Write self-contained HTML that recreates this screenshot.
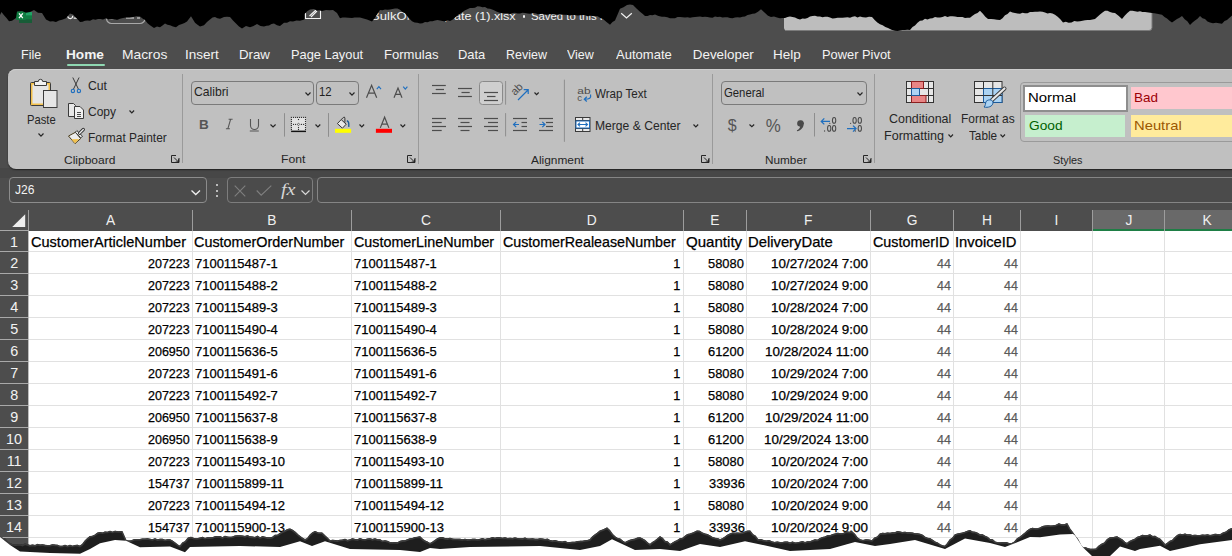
<!DOCTYPE html><html><head><meta charset="utf-8"><style>
html,body{margin:0;padding:0;}
body{width:1232px;height:556px;overflow:hidden;position:relative;background:#4d4d4d;font-family:"Liberation Sans",sans-serif;}
.t{position:absolute;white-space:pre;transform-origin:0 0;}
.c{-webkit-text-stroke:0.25px currentColor;}
.r{position:absolute;}
svg{position:absolute;overflow:visible;}
</style></head><body>
<div class="t " style="left:20.67px;top:47.75px;font-size:13.40px;line-height:13.40px;color:#f3f3f3;font-weight:normal;font-style:normal;transform:scaleX(0.9348);">File</div>
<div class="t " style="left:66.29px;top:47.75px;font-size:13.40px;line-height:13.40px;color:#f3f3f3;font-weight:bold;font-style:normal;transform:scaleX(1.0202);">Home</div>
<div class="t " style="left:122.07px;top:47.75px;font-size:13.40px;line-height:13.40px;color:#f3f3f3;font-weight:normal;font-style:normal;transform:scaleX(1.0320);">Macros</div>
<div class="t " style="left:185.45px;top:47.75px;font-size:13.40px;line-height:13.40px;color:#f3f3f3;font-weight:normal;font-style:normal;transform:scaleX(1.0100);">Insert</div>
<div class="t " style="left:239.01px;top:47.75px;font-size:13.40px;line-height:13.40px;color:#f3f3f3;font-weight:normal;font-style:normal;transform:scaleX(0.9900);">Draw</div>
<div class="t " style="left:290.95px;top:47.75px;font-size:13.40px;line-height:13.40px;color:#f3f3f3;font-weight:normal;font-style:normal;transform:scaleX(0.9588);">Page Layout</div>
<div class="t " style="left:383.53px;top:47.75px;font-size:13.40px;line-height:13.40px;color:#f3f3f3;font-weight:normal;font-style:normal;transform:scaleX(0.9768);">Formulas</div>
<div class="t " style="left:458.34px;top:47.75px;font-size:13.40px;line-height:13.40px;color:#f3f3f3;font-weight:normal;font-style:normal;transform:scaleX(0.9630);">Data</div>
<div class="t " style="left:506.17px;top:47.75px;font-size:13.40px;line-height:13.40px;color:#f3f3f3;font-weight:normal;font-style:normal;transform:scaleX(0.9331);">Review</div>
<div class="t " style="left:566.95px;top:47.75px;font-size:13.40px;line-height:13.40px;color:#f3f3f3;font-weight:normal;font-style:normal;transform:scaleX(0.9313);">View</div>
<div class="t " style="left:616.17px;top:47.75px;font-size:13.40px;line-height:13.40px;color:#f3f3f3;font-weight:normal;font-style:normal;transform:scaleX(0.9747);">Automate</div>
<div class="t " style="left:692.80px;top:47.75px;font-size:13.40px;line-height:13.40px;color:#f3f3f3;font-weight:normal;font-style:normal;">Developer</div>
<div class="t " style="left:773.09px;top:47.75px;font-size:13.40px;line-height:13.40px;color:#f3f3f3;font-weight:normal;font-style:normal;transform:scaleX(1.0078);">Help</div>
<div class="t " style="left:822.44px;top:47.75px;font-size:13.40px;line-height:13.40px;color:#f3f3f3;font-weight:normal;font-style:normal;transform:scaleX(0.9602);">Power Pivot</div>
<div class="r" style="left:67px;top:64px;width:38px;height:2px;background:#8fd8b2;border-radius:1px;"></div>
<div class="r" style="left:0px;top:168px;width:1232px;height:9.5px;background:#474747;"></div>
<div class="r" style="left:8px;top:68.5px;width:1240px;height:100px;background:#c0c0c0;border-radius:8px;box-shadow:0 1px 1.5px rgba(0,0,0,0.55), inset 0 1px 0 #cdcdcd;"></div>
<div class="r" style="left:182px;top:74px;width:1px;height:88.5px;background:#9a9a9a;"></div>
<div class="r" style="left:418px;top:74px;width:1px;height:89.5px;background:#9a9a9a;"></div>
<div class="r" style="left:712px;top:74px;width:1px;height:89.5px;background:#9a9a9a;"></div>
<div class="r" style="left:874px;top:74px;width:1px;height:88.5px;background:#9a9a9a;"></div>
<div class="t " style="left:63.69px;top:153.68px;font-size:11.60px;line-height:11.60px;color:#262626;font-weight:normal;font-style:normal;transform:scaleX(1.0349);">Clipboard</div>
<div class="t " style="left:280.50px;top:153.48px;font-size:11.60px;line-height:11.60px;color:#262626;font-weight:normal;font-style:normal;transform:scaleX(1.0507);">Font</div>
<div class="t " style="left:530.78px;top:153.58px;font-size:11.60px;line-height:11.60px;color:#262626;font-weight:normal;font-style:normal;transform:scaleX(1.0257);">Alignment</div>
<div class="t " style="left:764.53px;top:153.58px;font-size:11.60px;line-height:11.60px;color:#262626;font-weight:normal;font-style:normal;transform:scaleX(1.0146);">Number</div>
<div class="t " style="left:1052.51px;top:153.58px;font-size:11.60px;line-height:11.60px;color:#262626;font-weight:normal;font-style:normal;transform:scaleX(0.9333);">Styles</div>
<svg style="left:170.9px;top:155.3px" width="9" height="8" viewBox="0 0 9 8"><path d="M0.5 0.5H5M0.5 0.5V7.5H8V3" stroke="#262626" stroke-width="1" fill="none"/><path d="M3 2.5L7.5 7M7.5 4.2V7H4.7" stroke="#262626" stroke-width="1" fill="none"/></svg>
<svg style="left:407.3px;top:155.3px" width="9" height="8" viewBox="0 0 9 8"><path d="M0.5 0.5H5M0.5 0.5V7.5H8V3" stroke="#262626" stroke-width="1" fill="none"/><path d="M3 2.5L7.5 7M7.5 4.2V7H4.7" stroke="#262626" stroke-width="1" fill="none"/></svg>
<svg style="left:700.5px;top:155.3px" width="9" height="8" viewBox="0 0 9 8"><path d="M0.5 0.5H5M0.5 0.5V7.5H8V3" stroke="#262626" stroke-width="1" fill="none"/><path d="M3 2.5L7.5 7M7.5 4.2V7H4.7" stroke="#262626" stroke-width="1" fill="none"/></svg>
<svg style="left:862.9px;top:155.3px" width="9" height="8" viewBox="0 0 9 8"><path d="M0.5 0.5H5M0.5 0.5V7.5H8V3" stroke="#262626" stroke-width="1" fill="none"/><path d="M3 2.5L7.5 7M7.5 4.2V7H4.7" stroke="#262626" stroke-width="1" fill="none"/></svg>
<div class="t " style="left:26.58px;top:113.70px;font-size:12.40px;line-height:12.40px;color:#262626;font-weight:normal;font-style:normal;transform:scaleX(0.9058);">Paste</div>
<div class="t " style="left:87.88px;top:79.70px;font-size:12.40px;line-height:12.40px;color:#262626;font-weight:normal;font-style:normal;transform:scaleX(0.9852);">Cut</div>
<div class="t " style="left:87.89px;top:106.00px;font-size:12.40px;line-height:12.40px;color:#262626;font-weight:normal;font-style:normal;transform:scaleX(0.9684);">Copy</div>
<div class="t " style="left:87.52px;top:131.50px;font-size:12.40px;line-height:12.40px;color:#262626;font-weight:normal;font-style:normal;transform:scaleX(0.9606);">Format Painter</div>
<svg style="left:37.5px;top:133px" width="6" height="3.6" viewBox="0 0 6 3.6"><path d="M0.5 0.5L3.0 3.1L5.5 0.5" stroke="#262626" stroke-width="1.2" fill="none"/></svg>
<svg style="left:128.8px;top:110px" width="5.6" height="3.4" viewBox="0 0 5.6 3.4"><path d="M0.5 0.5L2.8 2.9L5.1 0.5" stroke="#262626" stroke-width="1.2" fill="none"/></svg>
<div class="r" style="left:191px;top:81px;width:121px;height:22px;border:1px solid #7a7a7a;border-radius:4px;"></div>
<div class="r" style="left:316px;top:81px;width:41px;height:22px;border:1px solid #7a7a7a;border-radius:4px;"></div>
<div class="t " style="left:193.98px;top:86.33px;font-size:12.60px;line-height:12.60px;color:#1f1f1f;font-weight:normal;font-style:normal;transform:scaleX(0.9673);">Calibri</div>
<div class="t " style="left:319.13px;top:86.33px;font-size:12.60px;line-height:12.60px;color:#1f1f1f;font-weight:normal;font-style:normal;transform:scaleX(0.9016);">12</div>
<svg style="left:304.5px;top:91.5px" width="6" height="3.6" viewBox="0 0 6 3.6"><path d="M0.5 0.5L3.0 3.1L5.5 0.5" stroke="#262626" stroke-width="1.2" fill="none"/></svg>
<svg style="left:349.2px;top:91.5px" width="6" height="3.6" viewBox="0 0 6 3.6"><path d="M0.5 0.5L3.0 3.1L5.5 0.5" stroke="#262626" stroke-width="1.2" fill="none"/></svg>
<div class="r" style="left:721px;top:81px;width:144px;height:22px;border:1px solid #7a7a7a;border-radius:4px;"></div>
<div class="t " style="left:724.03px;top:86.63px;font-size:12.60px;line-height:12.60px;color:#1f1f1f;font-weight:normal;font-style:normal;transform:scaleX(0.8997);">General</div>
<svg style="left:857.3px;top:92.3px" width="6" height="3.6" viewBox="0 0 6 3.6"><path d="M0.5 0.5L3.0 3.1L5.5 0.5" stroke="#262626" stroke-width="1.2" fill="none"/></svg>
<div class="t " style="left:595.15px;top:88.13px;font-size:12.60px;line-height:12.60px;color:#262626;font-weight:normal;font-style:normal;transform:scaleX(0.9214);">Wrap Text</div>
<div class="t " style="left:594.51px;top:120.03px;font-size:12.60px;line-height:12.60px;color:#262626;font-weight:normal;font-style:normal;transform:scaleX(0.9624);">Merge &amp; Center</div>
<svg style="left:692.8px;top:124px" width="5.7" height="3.4" viewBox="0 0 5.7 3.4"><path d="M0.5 0.5L2.85 2.9L5.2 0.5" stroke="#262626" stroke-width="1.2" fill="none"/></svg>
<div class="t " style="left:889.07px;top:112.60px;font-size:12.40px;line-height:12.40px;color:#262626;font-weight:normal;font-style:normal;transform:scaleX(1.0052);">Conditional</div>
<div class="t " style="left:884.27px;top:129.50px;font-size:12.40px;line-height:12.40px;color:#262626;font-weight:normal;font-style:normal;transform:scaleX(1.0131);">Formatting</div>
<svg style="left:947.5px;top:133.5px" width="5.5" height="3.3" viewBox="0 0 5.5 3.3"><path d="M0.5 0.5L2.75 2.8L5.0 0.5" stroke="#262626" stroke-width="1.2" fill="none"/></svg>
<div class="t " style="left:960.92px;top:112.60px;font-size:12.40px;line-height:12.40px;color:#262626;font-weight:normal;font-style:normal;transform:scaleX(0.9623);">Format as</div>
<div class="t " style="left:969.04px;top:129.50px;font-size:12.40px;line-height:12.40px;color:#262626;font-weight:normal;font-style:normal;transform:scaleX(0.9474);">Table</div>
<svg style="left:999.5px;top:133.5px" width="5.5" height="3.3" viewBox="0 0 5.5 3.3"><path d="M0.5 0.5L2.75 2.8L5.0 0.5" stroke="#262626" stroke-width="1.2" fill="none"/></svg>
<div class="r" style="left:1020px;top:81.5px;width:240px;height:60px;border:1px solid #9a9a9a;border-radius:4px;box-sizing:border-box;"></div>
<div class="r" style="left:1023px;top:84.5px;width:105px;height:27px;background:#8e8e8e;"></div>
<div class="r" style="left:1025px;top:86.5px;width:101px;height:23px;background:#fff;"></div>
<div class="r" style="left:1131px;top:87px;width:110px;height:22px;background:#ffc7ce;"></div>
<div class="r" style="left:1025px;top:115px;width:100px;height:22px;background:#c6efce;"></div>
<div class="r" style="left:1131px;top:115px;width:110px;height:22px;background:#ffeb9c;"></div>
<div class="t " style="left:1028.28px;top:91.02px;font-size:13.20px;line-height:13.20px;color:#000;font-weight:normal;font-style:normal;transform:scaleX(1.1313);">Normal</div>
<div class="t " style="left:1134.39px;top:91.02px;font-size:13.20px;line-height:13.20px;color:#9c0006;font-weight:normal;font-style:normal;transform:scaleX(1.0207);">Bad</div>
<div class="t " style="left:1028.81px;top:119.02px;font-size:13.20px;line-height:13.20px;color:#006100;font-weight:normal;font-style:normal;transform:scaleX(1.0398);">Good</div>
<div class="t " style="left:1134.29px;top:119.02px;font-size:13.20px;line-height:13.20px;color:#9c5700;font-weight:normal;font-style:normal;transform:scaleX(1.1211);">Neutral</div>
<div class="r" style="left:8.5px;top:177px;width:198px;height:25.5px;border:1px solid #8c8c8c;border-radius:4px;box-sizing:border-box;background:#4b4b4b;"></div>
<div class="t " style="left:14.61px;top:184.13px;font-size:12.60px;line-height:12.60px;color:#f3f3f3;font-weight:normal;font-style:normal;transform:scaleX(0.9558);">J26</div>
<svg style="left:190.5px;top:189.5px" width="9.5" height="5" viewBox="0 0 9.5 5"><path d="M0.5 0.5L4.75 4.5L9.0 0.5" stroke="#f0f0f0" stroke-width="1.3" fill="none"/></svg>
<div class="r" style="left:215.8px;top:184px;width:2px;height:2px;background:#e0e0e0;border-radius:1px;"></div>
<div class="r" style="left:215.8px;top:189.5px;width:2px;height:2px;background:#e0e0e0;border-radius:1px;"></div>
<div class="r" style="left:215.8px;top:195px;width:2px;height:2px;background:#e0e0e0;border-radius:1px;"></div>
<div class="r" style="left:227.3px;top:177px;width:85.5px;height:25.5px;border:1px solid #7d7d7d;border-radius:4px;box-sizing:border-box;background:#4b4b4b;"></div>
<div class="r" style="left:317.3px;top:177px;width:1000px;height:25.5px;border:1px solid #858585;border-radius:4px;box-sizing:border-box;background:#4b4b4b;"></div>
<svg style="left:234px;top:184.5px" width="12" height="12" viewBox="0 0 12 12"><path d="M0.7 0.7L11.3 11.3M11.3 0.7L0.7 11.3" stroke="#7f7f7f" stroke-width="1.1" fill="none"/></svg>
<svg style="left:255.5px;top:185px" width="16" height="11" viewBox="0 0 16 11"><path d="M0.7 5.5L5.2 10.2L15.3 0.6" stroke="#7f7f7f" stroke-width="1.1" fill="none"/></svg>
<svg style="left:301px;top:189.5px" width="9" height="5" viewBox="0 0 9 5"><path d="M0.5 0.5L4.5 4.5L8.5 0.5" stroke="#d8d8d8" stroke-width="1.2" fill="none"/></svg>
<div class="r" style="left:29px;top:231px;width:1203px;height:325px;background:#fff;"></div>
<div class="r" style="left:1093px;top:210px;width:140px;height:21px;background:#696969;"></div>
<div class="r" style="left:1093px;top:229px;width:140px;height:2px;background:#1e7e45;"></div>
<div class="r" style="left:28px;top:210px;width:1px;height:21px;background:#9d9d9d;"></div>
<div class="r" style="left:192px;top:210px;width:1px;height:21px;background:#9d9d9d;"></div>
<div class="r" style="left:351px;top:210px;width:1px;height:21px;background:#9d9d9d;"></div>
<div class="r" style="left:500px;top:210px;width:1px;height:21px;background:#9d9d9d;"></div>
<div class="r" style="left:683px;top:210px;width:1px;height:21px;background:#9d9d9d;"></div>
<div class="r" style="left:746px;top:210px;width:1px;height:21px;background:#9d9d9d;"></div>
<div class="r" style="left:870px;top:210px;width:1px;height:21px;background:#9d9d9d;"></div>
<div class="r" style="left:953px;top:210px;width:1px;height:21px;background:#9d9d9d;"></div>
<div class="r" style="left:1020px;top:210px;width:1px;height:21px;background:#9d9d9d;"></div>
<div class="r" style="left:1092px;top:210px;width:1px;height:21px;background:#9d9d9d;"></div>
<div class="r" style="left:1164px;top:210px;width:1px;height:21px;background:#9d9d9d;"></div>
<div class="r" style="left:0px;top:230px;width:29px;height:1px;background:#a8a8a8;"></div>
<svg style="left:0;top:0" width="1" height="1"><polygon points="12.2,227 25.2,214.2 25.2,227" fill="#ededed"/></svg>
<div class="t " style="left:105.90px;top:214.32px;font-size:13.80px;line-height:13.80px;color:#f0f0f0;font-weight:normal;font-style:normal;">A</div>
<div class="t " style="left:267.20px;top:214.32px;font-size:13.80px;line-height:13.80px;color:#f0f0f0;font-weight:normal;font-style:normal;">B</div>
<div class="t " style="left:420.93px;top:214.32px;font-size:13.80px;line-height:13.80px;color:#f0f0f0;font-weight:normal;font-style:normal;">C</div>
<div class="t " style="left:586.78px;top:214.32px;font-size:13.80px;line-height:13.80px;color:#f0f0f0;font-weight:normal;font-style:normal;">D</div>
<div class="t " style="left:710.13px;top:214.32px;font-size:13.80px;line-height:13.80px;color:#f0f0f0;font-weight:normal;font-style:normal;">E</div>
<div class="t " style="left:804.00px;top:214.32px;font-size:13.80px;line-height:13.80px;color:#f0f0f0;font-weight:normal;font-style:normal;">F</div>
<div class="t " style="left:906.80px;top:214.32px;font-size:13.80px;line-height:13.80px;color:#f0f0f0;font-weight:normal;font-style:normal;">G</div>
<div class="t " style="left:982.01px;top:214.32px;font-size:13.80px;line-height:13.80px;color:#f0f0f0;font-weight:normal;font-style:normal;">H</div>
<div class="t " style="left:1054.58px;top:214.32px;font-size:13.80px;line-height:13.80px;color:#f0f0f0;font-weight:normal;font-style:normal;">I</div>
<div class="t " style="left:1125.45px;top:214.32px;font-size:13.80px;line-height:13.80px;color:#f0f0f0;font-weight:normal;font-style:normal;">J</div>
<div class="t " style="left:1202.41px;top:214.32px;font-size:13.80px;line-height:13.80px;color:#f0f0f0;font-weight:normal;font-style:normal;">K</div>
<div class="r" style="left:28px;top:231px;width:1px;height:325px;background:#bdbdbd;"></div>
<div class="r" style="left:29px;top:251px;width:1203px;height:1px;background:#e1e1e1;"></div>
<div class="r" style="left:0px;top:251px;width:28px;height:1px;background:#a9a9a9;"></div>
<div class="r" style="left:29px;top:273px;width:1203px;height:1px;background:#e1e1e1;"></div>
<div class="r" style="left:0px;top:273px;width:28px;height:1px;background:#a9a9a9;"></div>
<div class="r" style="left:29px;top:295px;width:1203px;height:1px;background:#e1e1e1;"></div>
<div class="r" style="left:0px;top:295px;width:28px;height:1px;background:#a9a9a9;"></div>
<div class="r" style="left:29px;top:317px;width:1203px;height:1px;background:#e1e1e1;"></div>
<div class="r" style="left:0px;top:317px;width:28px;height:1px;background:#a9a9a9;"></div>
<div class="r" style="left:29px;top:339px;width:1203px;height:1px;background:#e1e1e1;"></div>
<div class="r" style="left:0px;top:339px;width:28px;height:1px;background:#a9a9a9;"></div>
<div class="r" style="left:29px;top:361px;width:1203px;height:1px;background:#e1e1e1;"></div>
<div class="r" style="left:0px;top:361px;width:28px;height:1px;background:#a9a9a9;"></div>
<div class="r" style="left:29px;top:383px;width:1203px;height:1px;background:#e1e1e1;"></div>
<div class="r" style="left:0px;top:383px;width:28px;height:1px;background:#a9a9a9;"></div>
<div class="r" style="left:29px;top:405px;width:1203px;height:1px;background:#e1e1e1;"></div>
<div class="r" style="left:0px;top:405px;width:28px;height:1px;background:#a9a9a9;"></div>
<div class="r" style="left:29px;top:427px;width:1203px;height:1px;background:#e1e1e1;"></div>
<div class="r" style="left:0px;top:427px;width:28px;height:1px;background:#a9a9a9;"></div>
<div class="r" style="left:29px;top:449px;width:1203px;height:1px;background:#e1e1e1;"></div>
<div class="r" style="left:0px;top:449px;width:28px;height:1px;background:#a9a9a9;"></div>
<div class="r" style="left:29px;top:471px;width:1203px;height:1px;background:#e1e1e1;"></div>
<div class="r" style="left:0px;top:471px;width:28px;height:1px;background:#a9a9a9;"></div>
<div class="r" style="left:29px;top:493px;width:1203px;height:1px;background:#e1e1e1;"></div>
<div class="r" style="left:0px;top:493px;width:28px;height:1px;background:#a9a9a9;"></div>
<div class="r" style="left:29px;top:515px;width:1203px;height:1px;background:#e1e1e1;"></div>
<div class="r" style="left:0px;top:515px;width:28px;height:1px;background:#a9a9a9;"></div>
<div class="r" style="left:29px;top:537px;width:1203px;height:1px;background:#e1e1e1;"></div>
<div class="r" style="left:0px;top:537px;width:28px;height:1px;background:#a9a9a9;"></div>
<div class="r" style="left:192px;top:231px;width:1px;height:325px;background:#e1e1e1;"></div>
<div class="r" style="left:351px;top:231px;width:1px;height:325px;background:#e1e1e1;"></div>
<div class="r" style="left:500px;top:231px;width:1px;height:325px;background:#e1e1e1;"></div>
<div class="r" style="left:683px;top:231px;width:1px;height:325px;background:#e1e1e1;"></div>
<div class="r" style="left:746px;top:231px;width:1px;height:325px;background:#e1e1e1;"></div>
<div class="r" style="left:870px;top:231px;width:1px;height:325px;background:#e1e1e1;"></div>
<div class="r" style="left:953px;top:231px;width:1px;height:325px;background:#e1e1e1;"></div>
<div class="r" style="left:1020px;top:231px;width:1px;height:325px;background:#e1e1e1;"></div>
<div class="r" style="left:1092px;top:231px;width:1px;height:325px;background:#e1e1e1;"></div>
<div class="r" style="left:1164px;top:231px;width:1px;height:325px;background:#e1e1e1;"></div>
<div class="t " style="left:10.10px;top:235.01px;font-size:14.40px;line-height:14.40px;color:#f2f2f2;font-weight:normal;font-style:normal;">1</div>
<div class="t " style="left:10.30px;top:255.91px;font-size:14.40px;line-height:14.40px;color:#f2f2f2;font-weight:normal;font-style:normal;">2</div>
<div class="t " style="left:10.34px;top:277.91px;font-size:14.40px;line-height:14.40px;color:#f2f2f2;font-weight:normal;font-style:normal;">3</div>
<div class="t " style="left:10.34px;top:299.91px;font-size:14.40px;line-height:14.40px;color:#f2f2f2;font-weight:normal;font-style:normal;">4</div>
<div class="t " style="left:10.31px;top:321.91px;font-size:14.40px;line-height:14.40px;color:#f2f2f2;font-weight:normal;font-style:normal;">5</div>
<div class="t " style="left:10.25px;top:343.91px;font-size:14.40px;line-height:14.40px;color:#f2f2f2;font-weight:normal;font-style:normal;">6</div>
<div class="t " style="left:10.29px;top:365.91px;font-size:14.40px;line-height:14.40px;color:#f2f2f2;font-weight:normal;font-style:normal;">7</div>
<div class="t " style="left:10.30px;top:387.91px;font-size:14.40px;line-height:14.40px;color:#f2f2f2;font-weight:normal;font-style:normal;">8</div>
<div class="t " style="left:10.30px;top:409.91px;font-size:14.40px;line-height:14.40px;color:#f2f2f2;font-weight:normal;font-style:normal;">9</div>
<div class="t " style="left:6.02px;top:431.91px;font-size:14.40px;line-height:14.40px;color:#f2f2f2;font-weight:normal;font-style:normal;">10</div>
<div class="t " style="left:6.63px;top:453.91px;font-size:14.40px;line-height:14.40px;color:#f2f2f2;font-weight:normal;font-style:normal;">11</div>
<div class="t " style="left:6.11px;top:475.91px;font-size:14.40px;line-height:14.40px;color:#f2f2f2;font-weight:normal;font-style:normal;">12</div>
<div class="t " style="left:6.06px;top:497.91px;font-size:14.40px;line-height:14.40px;color:#f2f2f2;font-weight:normal;font-style:normal;">13</div>
<div class="t " style="left:5.95px;top:519.91px;font-size:14.40px;line-height:14.40px;color:#f2f2f2;font-weight:normal;font-style:normal;">14</div>
<div class="t c" style="left:30.86px;top:234.98px;font-size:14.20px;line-height:14.20px;color:#000;font-weight:normal;font-style:normal;transform:scaleX(1.0242);">CustomerArticleNumber</div>
<div class="t c" style="left:194.47px;top:234.98px;font-size:14.20px;line-height:14.20px;color:#000;font-weight:normal;font-style:normal;transform:scaleX(1.0143);">CustomerOrderNumber</div>
<div class="t c" style="left:353.67px;top:234.98px;font-size:14.20px;line-height:14.20px;color:#000;font-weight:normal;font-style:normal;transform:scaleX(1.0098);">CustomerLineNumber</div>
<div class="t c" style="left:502.58px;top:234.98px;font-size:14.20px;line-height:14.20px;color:#000;font-weight:normal;font-style:normal;transform:scaleX(1.0047);">CustomerRealeaseNumber</div>
<div class="t c" style="left:685.59px;top:234.98px;font-size:14.20px;line-height:14.20px;color:#000;font-weight:normal;font-style:normal;transform:scaleX(1.0617);">Quantity</div>
<div class="t c" style="left:748.39px;top:234.98px;font-size:14.20px;line-height:14.20px;color:#000;font-weight:normal;font-style:normal;transform:scaleX(1.0429);">DeliveryDate</div>
<div class="t c" style="left:872.57px;top:234.98px;font-size:14.20px;line-height:14.20px;color:#000;font-weight:normal;font-style:normal;transform:scaleX(1.0088);">CustomerID</div>
<div class="t c" style="left:955.04px;top:234.98px;font-size:14.20px;line-height:14.20px;color:#000;font-weight:normal;font-style:normal;transform:scaleX(1.0402);">InvoiceID</div>
<div class="t c" style="left:147.97px;top:257.95px;font-size:12.70px;line-height:12.70px;color:#000;font-weight:normal;font-style:normal;transform:scaleX(0.9859);">207223</div>
<div class="t c" style="left:673.16px;top:257.95px;font-size:12.70px;line-height:12.70px;color:#000;font-weight:normal;font-style:normal;">1</div>
<div class="t c" style="left:708.48px;top:257.95px;font-size:12.70px;line-height:12.70px;color:#000;font-weight:normal;font-style:normal;transform:scaleX(1.0142);">58080</div>
<div class="t c" style="left:770.98px;top:257.95px;font-size:12.70px;line-height:12.70px;color:#000;font-weight:normal;font-style:normal;transform:scaleX(1.0571);">10/27/2024 7:00</div>
<div class="t c" style="left:936.81px;top:257.95px;font-size:12.70px;line-height:12.70px;color:#5a5a5a;font-weight:normal;font-style:normal;transform:scaleX(0.9805);">44</div>
<div class="t c" style="left:1003.81px;top:257.95px;font-size:12.70px;line-height:12.70px;color:#5a5a5a;font-weight:normal;font-style:normal;transform:scaleX(0.9805);">44</div>
<div class="t c" style="left:194.73px;top:257.95px;font-size:12.70px;line-height:12.70px;color:#000;font-weight:normal;font-style:normal;transform:scaleX(1.0230);">7100115487-1</div>
<div class="t c" style="left:353.83px;top:257.95px;font-size:12.70px;line-height:12.70px;color:#000;font-weight:normal;font-style:normal;transform:scaleX(1.0230);">7100115487-1</div>
<div class="t c" style="left:147.97px;top:279.95px;font-size:12.70px;line-height:12.70px;color:#000;font-weight:normal;font-style:normal;transform:scaleX(0.9859);">207223</div>
<div class="t c" style="left:673.16px;top:279.95px;font-size:12.70px;line-height:12.70px;color:#000;font-weight:normal;font-style:normal;">1</div>
<div class="t c" style="left:708.48px;top:279.95px;font-size:12.70px;line-height:12.70px;color:#000;font-weight:normal;font-style:normal;transform:scaleX(1.0142);">58080</div>
<div class="t c" style="left:770.98px;top:279.95px;font-size:12.70px;line-height:12.70px;color:#000;font-weight:normal;font-style:normal;transform:scaleX(1.0571);">10/27/2024 9:00</div>
<div class="t c" style="left:936.81px;top:279.95px;font-size:12.70px;line-height:12.70px;color:#5a5a5a;font-weight:normal;font-style:normal;transform:scaleX(0.9805);">44</div>
<div class="t c" style="left:1003.81px;top:279.95px;font-size:12.70px;line-height:12.70px;color:#5a5a5a;font-weight:normal;font-style:normal;transform:scaleX(0.9805);">44</div>
<div class="t c" style="left:194.73px;top:279.95px;font-size:12.70px;line-height:12.70px;color:#000;font-weight:normal;font-style:normal;transform:scaleX(1.0230);">7100115488-2</div>
<div class="t c" style="left:353.83px;top:279.95px;font-size:12.70px;line-height:12.70px;color:#000;font-weight:normal;font-style:normal;transform:scaleX(1.0230);">7100115488-2</div>
<div class="t c" style="left:147.97px;top:301.95px;font-size:12.70px;line-height:12.70px;color:#000;font-weight:normal;font-style:normal;transform:scaleX(0.9859);">207223</div>
<div class="t c" style="left:673.16px;top:301.95px;font-size:12.70px;line-height:12.70px;color:#000;font-weight:normal;font-style:normal;">1</div>
<div class="t c" style="left:708.48px;top:301.95px;font-size:12.70px;line-height:12.70px;color:#000;font-weight:normal;font-style:normal;transform:scaleX(1.0142);">58080</div>
<div class="t c" style="left:770.98px;top:301.95px;font-size:12.70px;line-height:12.70px;color:#000;font-weight:normal;font-style:normal;transform:scaleX(1.0571);">10/28/2024 7:00</div>
<div class="t c" style="left:936.81px;top:301.95px;font-size:12.70px;line-height:12.70px;color:#5a5a5a;font-weight:normal;font-style:normal;transform:scaleX(0.9805);">44</div>
<div class="t c" style="left:1003.81px;top:301.95px;font-size:12.70px;line-height:12.70px;color:#5a5a5a;font-weight:normal;font-style:normal;transform:scaleX(0.9805);">44</div>
<div class="t c" style="left:194.73px;top:301.95px;font-size:12.70px;line-height:12.70px;color:#000;font-weight:normal;font-style:normal;transform:scaleX(1.0230);">7100115489-3</div>
<div class="t c" style="left:353.83px;top:301.95px;font-size:12.70px;line-height:12.70px;color:#000;font-weight:normal;font-style:normal;transform:scaleX(1.0230);">7100115489-3</div>
<div class="t c" style="left:147.97px;top:323.95px;font-size:12.70px;line-height:12.70px;color:#000;font-weight:normal;font-style:normal;transform:scaleX(0.9859);">207223</div>
<div class="t c" style="left:673.16px;top:323.95px;font-size:12.70px;line-height:12.70px;color:#000;font-weight:normal;font-style:normal;">1</div>
<div class="t c" style="left:708.48px;top:323.95px;font-size:12.70px;line-height:12.70px;color:#000;font-weight:normal;font-style:normal;transform:scaleX(1.0142);">58080</div>
<div class="t c" style="left:770.98px;top:323.95px;font-size:12.70px;line-height:12.70px;color:#000;font-weight:normal;font-style:normal;transform:scaleX(1.0571);">10/28/2024 9:00</div>
<div class="t c" style="left:936.81px;top:323.95px;font-size:12.70px;line-height:12.70px;color:#5a5a5a;font-weight:normal;font-style:normal;transform:scaleX(0.9805);">44</div>
<div class="t c" style="left:1003.81px;top:323.95px;font-size:12.70px;line-height:12.70px;color:#5a5a5a;font-weight:normal;font-style:normal;transform:scaleX(0.9805);">44</div>
<div class="t c" style="left:194.73px;top:323.95px;font-size:12.70px;line-height:12.70px;color:#000;font-weight:normal;font-style:normal;transform:scaleX(1.0230);">7100115490-4</div>
<div class="t c" style="left:353.83px;top:323.95px;font-size:12.70px;line-height:12.70px;color:#000;font-weight:normal;font-style:normal;transform:scaleX(1.0230);">7100115490-4</div>
<div class="t c" style="left:147.91px;top:345.95px;font-size:12.70px;line-height:12.70px;color:#000;font-weight:normal;font-style:normal;transform:scaleX(0.9859);">206950</div>
<div class="t c" style="left:673.16px;top:345.95px;font-size:12.70px;line-height:12.70px;color:#000;font-weight:normal;font-style:normal;">1</div>
<div class="t c" style="left:708.48px;top:345.95px;font-size:12.70px;line-height:12.70px;color:#000;font-weight:normal;font-style:normal;transform:scaleX(1.0142);">61200</div>
<div class="t c" style="left:764.51px;top:345.95px;font-size:12.70px;line-height:12.70px;color:#000;font-weight:normal;font-style:normal;transform:scaleX(1.0571);">10/28/2024 11:00</div>
<div class="t c" style="left:936.81px;top:345.95px;font-size:12.70px;line-height:12.70px;color:#5a5a5a;font-weight:normal;font-style:normal;transform:scaleX(0.9805);">44</div>
<div class="t c" style="left:1003.81px;top:345.95px;font-size:12.70px;line-height:12.70px;color:#5a5a5a;font-weight:normal;font-style:normal;transform:scaleX(0.9805);">44</div>
<div class="t c" style="left:194.73px;top:345.95px;font-size:12.70px;line-height:12.70px;color:#000;font-weight:normal;font-style:normal;transform:scaleX(1.0230);">7100115636-5</div>
<div class="t c" style="left:353.83px;top:345.95px;font-size:12.70px;line-height:12.70px;color:#000;font-weight:normal;font-style:normal;transform:scaleX(1.0230);">7100115636-5</div>
<div class="t c" style="left:147.97px;top:367.95px;font-size:12.70px;line-height:12.70px;color:#000;font-weight:normal;font-style:normal;transform:scaleX(0.9859);">207223</div>
<div class="t c" style="left:673.16px;top:367.95px;font-size:12.70px;line-height:12.70px;color:#000;font-weight:normal;font-style:normal;">1</div>
<div class="t c" style="left:708.48px;top:367.95px;font-size:12.70px;line-height:12.70px;color:#000;font-weight:normal;font-style:normal;transform:scaleX(1.0142);">58080</div>
<div class="t c" style="left:770.98px;top:367.95px;font-size:12.70px;line-height:12.70px;color:#000;font-weight:normal;font-style:normal;transform:scaleX(1.0571);">10/29/2024 7:00</div>
<div class="t c" style="left:936.81px;top:367.95px;font-size:12.70px;line-height:12.70px;color:#5a5a5a;font-weight:normal;font-style:normal;transform:scaleX(0.9805);">44</div>
<div class="t c" style="left:1003.81px;top:367.95px;font-size:12.70px;line-height:12.70px;color:#5a5a5a;font-weight:normal;font-style:normal;transform:scaleX(0.9805);">44</div>
<div class="t c" style="left:194.73px;top:367.95px;font-size:12.70px;line-height:12.70px;color:#000;font-weight:normal;font-style:normal;transform:scaleX(1.0230);">7100115491-6</div>
<div class="t c" style="left:353.83px;top:367.95px;font-size:12.70px;line-height:12.70px;color:#000;font-weight:normal;font-style:normal;transform:scaleX(1.0230);">7100115491-6</div>
<div class="t c" style="left:147.97px;top:389.95px;font-size:12.70px;line-height:12.70px;color:#000;font-weight:normal;font-style:normal;transform:scaleX(0.9859);">207223</div>
<div class="t c" style="left:673.16px;top:389.95px;font-size:12.70px;line-height:12.70px;color:#000;font-weight:normal;font-style:normal;">1</div>
<div class="t c" style="left:708.48px;top:389.95px;font-size:12.70px;line-height:12.70px;color:#000;font-weight:normal;font-style:normal;transform:scaleX(1.0142);">58080</div>
<div class="t c" style="left:770.98px;top:389.95px;font-size:12.70px;line-height:12.70px;color:#000;font-weight:normal;font-style:normal;transform:scaleX(1.0571);">10/29/2024 9:00</div>
<div class="t c" style="left:936.81px;top:389.95px;font-size:12.70px;line-height:12.70px;color:#5a5a5a;font-weight:normal;font-style:normal;transform:scaleX(0.9805);">44</div>
<div class="t c" style="left:1003.81px;top:389.95px;font-size:12.70px;line-height:12.70px;color:#5a5a5a;font-weight:normal;font-style:normal;transform:scaleX(0.9805);">44</div>
<div class="t c" style="left:194.73px;top:389.95px;font-size:12.70px;line-height:12.70px;color:#000;font-weight:normal;font-style:normal;transform:scaleX(1.0230);">7100115492-7</div>
<div class="t c" style="left:353.83px;top:389.95px;font-size:12.70px;line-height:12.70px;color:#000;font-weight:normal;font-style:normal;transform:scaleX(1.0230);">7100115492-7</div>
<div class="t c" style="left:147.91px;top:411.95px;font-size:12.70px;line-height:12.70px;color:#000;font-weight:normal;font-style:normal;transform:scaleX(0.9859);">206950</div>
<div class="t c" style="left:673.16px;top:411.95px;font-size:12.70px;line-height:12.70px;color:#000;font-weight:normal;font-style:normal;">1</div>
<div class="t c" style="left:708.48px;top:411.95px;font-size:12.70px;line-height:12.70px;color:#000;font-weight:normal;font-style:normal;transform:scaleX(1.0142);">61200</div>
<div class="t c" style="left:764.51px;top:411.95px;font-size:12.70px;line-height:12.70px;color:#000;font-weight:normal;font-style:normal;transform:scaleX(1.0571);">10/29/2024 11:00</div>
<div class="t c" style="left:936.81px;top:411.95px;font-size:12.70px;line-height:12.70px;color:#5a5a5a;font-weight:normal;font-style:normal;transform:scaleX(0.9805);">44</div>
<div class="t c" style="left:1003.81px;top:411.95px;font-size:12.70px;line-height:12.70px;color:#5a5a5a;font-weight:normal;font-style:normal;transform:scaleX(0.9805);">44</div>
<div class="t c" style="left:194.73px;top:411.95px;font-size:12.70px;line-height:12.70px;color:#000;font-weight:normal;font-style:normal;transform:scaleX(1.0230);">7100115637-8</div>
<div class="t c" style="left:353.83px;top:411.95px;font-size:12.70px;line-height:12.70px;color:#000;font-weight:normal;font-style:normal;transform:scaleX(1.0230);">7100115637-8</div>
<div class="t c" style="left:147.91px;top:433.95px;font-size:12.70px;line-height:12.70px;color:#000;font-weight:normal;font-style:normal;transform:scaleX(0.9859);">206950</div>
<div class="t c" style="left:673.16px;top:433.95px;font-size:12.70px;line-height:12.70px;color:#000;font-weight:normal;font-style:normal;">1</div>
<div class="t c" style="left:708.48px;top:433.95px;font-size:12.70px;line-height:12.70px;color:#000;font-weight:normal;font-style:normal;transform:scaleX(1.0142);">61200</div>
<div class="t c" style="left:763.51px;top:433.95px;font-size:12.70px;line-height:12.70px;color:#000;font-weight:normal;font-style:normal;transform:scaleX(1.0571);">10/29/2024 13:00</div>
<div class="t c" style="left:936.81px;top:433.95px;font-size:12.70px;line-height:12.70px;color:#5a5a5a;font-weight:normal;font-style:normal;transform:scaleX(0.9805);">44</div>
<div class="t c" style="left:1003.81px;top:433.95px;font-size:12.70px;line-height:12.70px;color:#5a5a5a;font-weight:normal;font-style:normal;transform:scaleX(0.9805);">44</div>
<div class="t c" style="left:194.73px;top:433.95px;font-size:12.70px;line-height:12.70px;color:#000;font-weight:normal;font-style:normal;transform:scaleX(1.0230);">7100115638-9</div>
<div class="t c" style="left:353.83px;top:433.95px;font-size:12.70px;line-height:12.70px;color:#000;font-weight:normal;font-style:normal;transform:scaleX(1.0230);">7100115638-9</div>
<div class="t c" style="left:147.97px;top:455.95px;font-size:12.70px;line-height:12.70px;color:#000;font-weight:normal;font-style:normal;transform:scaleX(0.9859);">207223</div>
<div class="t c" style="left:673.16px;top:455.95px;font-size:12.70px;line-height:12.70px;color:#000;font-weight:normal;font-style:normal;">1</div>
<div class="t c" style="left:708.48px;top:455.95px;font-size:12.70px;line-height:12.70px;color:#000;font-weight:normal;font-style:normal;transform:scaleX(1.0142);">58080</div>
<div class="t c" style="left:770.98px;top:455.95px;font-size:12.70px;line-height:12.70px;color:#000;font-weight:normal;font-style:normal;transform:scaleX(1.0571);">10/20/2024 7:00</div>
<div class="t c" style="left:936.81px;top:455.95px;font-size:12.70px;line-height:12.70px;color:#5a5a5a;font-weight:normal;font-style:normal;transform:scaleX(0.9805);">44</div>
<div class="t c" style="left:1003.81px;top:455.95px;font-size:12.70px;line-height:12.70px;color:#5a5a5a;font-weight:normal;font-style:normal;transform:scaleX(0.9805);">44</div>
<div class="t c" style="left:194.73px;top:455.95px;font-size:12.70px;line-height:12.70px;color:#000;font-weight:normal;font-style:normal;transform:scaleX(1.0230);">7100115493-10</div>
<div class="t c" style="left:353.83px;top:455.95px;font-size:12.70px;line-height:12.70px;color:#000;font-weight:normal;font-style:normal;transform:scaleX(1.0230);">7100115493-10</div>
<div class="t c" style="left:148.05px;top:477.95px;font-size:12.70px;line-height:12.70px;color:#000;font-weight:normal;font-style:normal;transform:scaleX(0.9859);">154737</div>
<div class="t c" style="left:673.16px;top:477.95px;font-size:12.70px;line-height:12.70px;color:#000;font-weight:normal;font-style:normal;">1</div>
<div class="t c" style="left:708.55px;top:477.95px;font-size:12.70px;line-height:12.70px;color:#000;font-weight:normal;font-style:normal;transform:scaleX(1.0142);">33936</div>
<div class="t c" style="left:770.98px;top:477.95px;font-size:12.70px;line-height:12.70px;color:#000;font-weight:normal;font-style:normal;transform:scaleX(1.0571);">10/20/2024 7:00</div>
<div class="t c" style="left:936.81px;top:477.95px;font-size:12.70px;line-height:12.70px;color:#5a5a5a;font-weight:normal;font-style:normal;transform:scaleX(0.9805);">44</div>
<div class="t c" style="left:1003.81px;top:477.95px;font-size:12.70px;line-height:12.70px;color:#5a5a5a;font-weight:normal;font-style:normal;transform:scaleX(0.9805);">44</div>
<div class="t c" style="left:194.73px;top:477.95px;font-size:12.70px;line-height:12.70px;color:#000;font-weight:normal;font-style:normal;transform:scaleX(1.0230);">7100115899-11</div>
<div class="t c" style="left:353.83px;top:477.95px;font-size:12.70px;line-height:12.70px;color:#000;font-weight:normal;font-style:normal;transform:scaleX(1.0230);">7100115899-11</div>
<div class="t c" style="left:147.97px;top:499.95px;font-size:12.70px;line-height:12.70px;color:#000;font-weight:normal;font-style:normal;transform:scaleX(0.9859);">207223</div>
<div class="t c" style="left:673.16px;top:499.95px;font-size:12.70px;line-height:12.70px;color:#000;font-weight:normal;font-style:normal;">1</div>
<div class="t c" style="left:708.48px;top:499.95px;font-size:12.70px;line-height:12.70px;color:#000;font-weight:normal;font-style:normal;transform:scaleX(1.0142);">58080</div>
<div class="t c" style="left:770.98px;top:499.95px;font-size:12.70px;line-height:12.70px;color:#000;font-weight:normal;font-style:normal;transform:scaleX(1.0571);">10/20/2024 9:00</div>
<div class="t c" style="left:936.81px;top:499.95px;font-size:12.70px;line-height:12.70px;color:#5a5a5a;font-weight:normal;font-style:normal;transform:scaleX(0.9805);">44</div>
<div class="t c" style="left:1003.81px;top:499.95px;font-size:12.70px;line-height:12.70px;color:#5a5a5a;font-weight:normal;font-style:normal;transform:scaleX(0.9805);">44</div>
<div class="t c" style="left:194.73px;top:499.95px;font-size:12.70px;line-height:12.70px;color:#000;font-weight:normal;font-style:normal;transform:scaleX(1.0230);">7100115494-12</div>
<div class="t c" style="left:353.83px;top:499.95px;font-size:12.70px;line-height:12.70px;color:#000;font-weight:normal;font-style:normal;transform:scaleX(1.0230);">7100115494-12</div>
<div class="t c" style="left:148.05px;top:521.95px;font-size:12.70px;line-height:12.70px;color:#000;font-weight:normal;font-style:normal;transform:scaleX(0.9859);">154737</div>
<div class="t c" style="left:673.16px;top:521.95px;font-size:12.70px;line-height:12.70px;color:#000;font-weight:normal;font-style:normal;">1</div>
<div class="t c" style="left:708.55px;top:521.95px;font-size:12.70px;line-height:12.70px;color:#000;font-weight:normal;font-style:normal;transform:scaleX(1.0142);">33936</div>
<div class="t c" style="left:770.98px;top:521.95px;font-size:12.70px;line-height:12.70px;color:#000;font-weight:normal;font-style:normal;transform:scaleX(1.0571);">10/20/2024 9:00</div>
<div class="t c" style="left:936.81px;top:521.95px;font-size:12.70px;line-height:12.70px;color:#5a5a5a;font-weight:normal;font-style:normal;transform:scaleX(0.9805);">44</div>
<div class="t c" style="left:1003.81px;top:521.95px;font-size:12.70px;line-height:12.70px;color:#5a5a5a;font-weight:normal;font-style:normal;transform:scaleX(0.9805);">44</div>
<div class="t c" style="left:194.73px;top:521.95px;font-size:12.70px;line-height:12.70px;color:#000;font-weight:normal;font-style:normal;transform:scaleX(1.0230);">7100115900-13</div>
<div class="t c" style="left:353.83px;top:521.95px;font-size:12.70px;line-height:12.70px;color:#000;font-weight:normal;font-style:normal;transform:scaleX(1.0230);">7100115900-13</div>
<svg style="left:534px;top:92px" width="5.2" height="3.2" viewBox="0 0 5.2 3.2"><path d="M0.5 0.5L2.6 2.7L4.7 0.5" stroke="#262626" stroke-width="1.2" fill="none"/></svg>
<svg style="left:748.6px;top:124px" width="5.7" height="3.2" viewBox="0 0 5.7 3.2"><path d="M0.5 0.5L2.85 2.7L5.2 0.5" stroke="#262626" stroke-width="1.2" fill="none"/></svg>
<svg style="left:270.4px;top:123.8px" width="6.1" height="3.4" viewBox="0 0 6.1 3.4"><path d="M0.5 0.5L3.05 2.9L5.6 0.5" stroke="#262626" stroke-width="1.2" fill="none"/></svg>
<svg style="left:314.5px;top:123.9px" width="5.8" height="3.4" viewBox="0 0 5.8 3.4"><path d="M0.5 0.5L2.9 2.9L5.3 0.5" stroke="#262626" stroke-width="1.2" fill="none"/></svg>
<svg style="left:358.7px;top:123.9px" width="5.6" height="3.4" viewBox="0 0 5.6 3.4"><path d="M0.5 0.5L2.8 2.9L5.1 0.5" stroke="#262626" stroke-width="1.2" fill="none"/></svg>
<svg style="left:399.7px;top:124px" width="5.7" height="3.4" viewBox="0 0 5.7 3.4"><path d="M0.5 0.5L2.85 2.9L5.2 0.5" stroke="#262626" stroke-width="1.2" fill="none"/></svg>
<svg style="left:0;top:0" width="1232" height="556" viewBox="0 0 1232 556"><rect x="30.5" y="82.5" width="20" height="23" rx="1" fill="#f3c04a" stroke="#3c3c3c" stroke-width="1"/><rect x="32.5" y="84.5" width="16" height="19" fill="#e6e6e6"/><path d="M34.5 85.5V81.5H38.3A2.2 2.2 0 0 1 42.7 81.5H46.5V85.5Z" fill="#f2f2f2" stroke="#3c3c3c" stroke-width="1"/><rect x="43.5" y="90.5" width="13.5" height="17" fill="#e6e6e6" stroke="#3c3c3c" stroke-width="1"/><path d="M72.8 77.5L78.5 89.3M79.1 77.5L73.4 89.3" stroke="#3a3a3a" stroke-width="1" fill="none"/><circle cx="72.9" cy="90.9" r="1.65" stroke="#1f6fbf" stroke-width="1.15" fill="none"/><circle cx="78.9" cy="90.9" r="1.65" stroke="#1f6fbf" stroke-width="1.15" fill="none"/><path d="M68.5 103.5H73.5L75.5 105.5V116.5H68.5Z" fill="#e8e8e8" stroke="#3a3a3a" stroke-width="1"/><path d="M74.5 106.5H80L83.5 110V118.5H74.5Z" fill="#f0f0f0" stroke="#3a3a3a" stroke-width="1"/><path d="M77 112.5H81M77 114.5H81M77 116.5H81" stroke="#3a3a3a" stroke-width="0.9"/><path d="M68.5 136L75.6 132.2L80.6 138.6L75 143.6Z" fill="#ececec" stroke="#4a3c1a" stroke-width="1"/><path d="M71.3 139.3L79.2 139.1L75 143.2Z" fill="#f2c14e"/><path d="M75.2 132.3L76.9 130.6L82.5 136.2L80.8 137.9Z" fill="#e6e6e6" stroke="#333" stroke-width="1"/><path d="M79.6 133.2L83.3 129.5" stroke="#333" stroke-width="3.2" stroke-linecap="round"/><path d="M79.6 133.2L83.3 129.5" stroke="#eee" stroke-width="1.3" stroke-linecap="round"/><path d="M366.5 97.8L371.6 85.3L376.7 97.8M368.4 93.2H374.8" stroke="#4d4d4d" stroke-width="1.2" fill="none"/><path d="M376.8 89.2L378.9 86.6L381 89.2" stroke="#1f6fbf" stroke-width="1.1" fill="none"/><path d="M394 97.8L398 88L402 97.8M395.4 94.4H400.6" stroke="#4d4d4d" stroke-width="1.2" fill="none"/><path d="M403.2 86.6L405.3 89.2L407.4 86.6" stroke="#1f6fbf" stroke-width="1.1" fill="none"/><text x="199" y="128.8" font-family="Liberation Sans" font-weight="bold" font-size="13.5" fill="#555">B</text><path d="M228.6 119.3H232.6M225.9 128.7H229.9M230.6 119.3L227.9 128.7" stroke="#555" stroke-width="1.1" fill="none"/><path d="M250.5 119V125.5A4 4 0 0 0 258.5 125.5V119" stroke="#555" stroke-width="1.1" fill="none"/><path d="M249.8 131H258.8" stroke="#555" stroke-width="1"/><rect x="291.5" y="117.5" width="14.5" height="12.5" fill="#e2e2e2"/><rect x="290.85" y="116.85" width="1.1" height="1.1" fill="#2a2a2a"/><rect x="292.95" y="116.85" width="1.1" height="1.1" fill="#2a2a2a"/><rect x="295.05" y="116.85" width="1.1" height="1.1" fill="#2a2a2a"/><rect x="296.95" y="116.85" width="1.1" height="1.1" fill="#2a2a2a"/><rect x="298.95" y="116.85" width="1.1" height="1.1" fill="#2a2a2a"/><rect x="300.95" y="116.85" width="1.1" height="1.1" fill="#2a2a2a"/><rect x="303.05" y="116.85" width="1.1" height="1.1" fill="#2a2a2a"/><rect x="304.95" y="116.85" width="1.1" height="1.1" fill="#2a2a2a"/><rect x="290.85" y="118.95" width="1.1" height="1.1" fill="#2a2a2a"/><rect x="304.95" y="118.95" width="1.1" height="1.1" fill="#2a2a2a"/><rect x="290.85" y="120.95" width="1.1" height="1.1" fill="#2a2a2a"/><rect x="304.95" y="120.95" width="1.1" height="1.1" fill="#2a2a2a"/><rect x="290.85" y="123.05" width="1.1" height="1.1" fill="#2a2a2a"/><rect x="304.95" y="123.05" width="1.1" height="1.1" fill="#2a2a2a"/><rect x="290.85" y="124.95" width="1.1" height="1.1" fill="#2a2a2a"/><rect x="304.95" y="124.95" width="1.1" height="1.1" fill="#2a2a2a"/><rect x="290.85" y="127.05" width="1.1" height="1.1" fill="#2a2a2a"/><rect x="304.95" y="127.05" width="1.1" height="1.1" fill="#2a2a2a"/><rect x="290.85" y="128.95" width="1.1" height="1.1" fill="#2a2a2a"/><rect x="304.95" y="128.95" width="1.1" height="1.1" fill="#2a2a2a"/><rect x="297.95" y="118.95" width="1.1" height="1.1" fill="#2a2a2a"/><rect x="297.95" y="127.05" width="1.1" height="1.1" fill="#2a2a2a"/><rect x="297.95" y="128.95" width="1.1" height="1.1" fill="#2a2a2a"/><rect x="292.95" y="123.85" width="1.1" height="1.1" fill="#2a2a2a"/><rect x="295.05" y="123.85" width="1.1" height="1.1" fill="#2a2a2a"/><rect x="300.95" y="123.85" width="1.1" height="1.1" fill="#2a2a2a"/><rect x="303.05" y="123.85" width="1.1" height="1.1" fill="#2a2a2a"/><path d="M298.5 123.1L299.8 124.4L298.5 125.7L297.2 124.4Z" fill="none" stroke="#2a2a2a" stroke-width="0.7"/><path d="M291.1 131.4H306" stroke="#111" stroke-width="1.4"/><path d="M284.5 113.2V136.6M328.5 113.1V136.8" stroke="#8e8e8e" stroke-width="1"/><path d="M337.4 123.6L341.2 119.6L346.2 124.2L342.4 128.2Z" fill="#e8e8e8" stroke="#333" stroke-width="1"/><path d="M341.2 119.6L343.4 117.4Q344.8 116.4 344.9 118.3L344.9 122.6" stroke="#333" stroke-width="1" fill="none"/><path d="M346.8 120.7Q349.4 121.2 348.7 126.9" stroke="#1a5a96" stroke-width="1.4" fill="none"/><rect x="335" y="128.8" width="16.1" height="4" fill="#ffff00"/><path d="M380.3 127.9L384.6 117.2L388.9 127.9M381.9 124.2H387.3" stroke="#4d4d4d" stroke-width="1.2" fill="none"/><rect x="375.9" y="128.8" width="16.1" height="4" fill="#ff0000"/><path d="M432.0 85.5H445.8" stroke="#4d4d4d" stroke-width="1.2"/><path d="M435.7 89.5H444.0" stroke="#4d4d4d" stroke-width="1.2"/><path d="M432.0 93.5H445.8" stroke="#4d4d4d" stroke-width="1.2"/><path d="M458.0 88.5H471.9" stroke="#4d4d4d" stroke-width="1.2"/><path d="M461.5 92.5H469.7" stroke="#4d4d4d" stroke-width="1.2"/><path d="M458.0 96.5H471.9" stroke="#4d4d4d" stroke-width="1.2"/><rect x="479.5" y="81.5" width="23" height="23" rx="3" fill="#cfcfcf" stroke="#8a8a8a" stroke-width="1"/><path d="M484.0 92.5H498.0" stroke="#4d4d4d" stroke-width="1.2"/><path d="M487.0 96.5H495.5" stroke="#4d4d4d" stroke-width="1.2"/><path d="M484.0 100.5H498.0" stroke="#4d4d4d" stroke-width="1.2"/><path d="M505.6 81V104.7M505.6 113.1V136.4M564.4 79.7V141.8" stroke="#8e8e8e" stroke-width="1"/><path d="M432.0 118.5H446.0" stroke="#4d4d4d" stroke-width="1.2"/><path d="M432.0 122.5H441.7" stroke="#4d4d4d" stroke-width="1.2"/><path d="M432.0 126.5H446.0" stroke="#4d4d4d" stroke-width="1.2"/><path d="M432.0 130.5H441.7" stroke="#4d4d4d" stroke-width="1.2"/><path d="M458.0 118.5H472.0" stroke="#4d4d4d" stroke-width="1.2"/><path d="M460.5 122.5H469.5" stroke="#4d4d4d" stroke-width="1.2"/><path d="M458.0 126.5H472.0" stroke="#4d4d4d" stroke-width="1.2"/><path d="M460.5 130.5H469.5" stroke="#4d4d4d" stroke-width="1.2"/><path d="M484.0 118.5H498.0" stroke="#4d4d4d" stroke-width="1.2"/><path d="M488.0 122.5H498.0" stroke="#4d4d4d" stroke-width="1.2"/><path d="M484.0 126.5H498.0" stroke="#4d4d4d" stroke-width="1.2"/><path d="M488.0 130.5H498.0" stroke="#4d4d4d" stroke-width="1.2"/><path d="M513.0 118.5H527.0" stroke="#4d4d4d" stroke-width="1.2"/><path d="M521.5 122.5H527.0" stroke="#4d4d4d" stroke-width="1.2"/><path d="M521.5 126.5H527.0" stroke="#4d4d4d" stroke-width="1.2"/><path d="M513.0 130.5H527.0" stroke="#4d4d4d" stroke-width="1.2"/><path d="M539.0 118.5H553.0" stroke="#4d4d4d" stroke-width="1.2"/><path d="M546.0 122.5H553.0" stroke="#4d4d4d" stroke-width="1.2"/><path d="M546.0 126.5H553.0" stroke="#4d4d4d" stroke-width="1.2"/><path d="M539.0 130.5H553.0" stroke="#4d4d4d" stroke-width="1.2"/><path d="M519 124.5H513.5M516.2 121.8L513.5 124.5L516.2 127.2" stroke="#1f6fbf" stroke-width="1.2" fill="none"/><path d="M539.5 124.5H545M542.3 121.8L545 124.5L542.3 127.2" stroke="#1f6fbf" stroke-width="1.2" fill="none"/><text x="0" y="0" font-family="Liberation Sans" font-size="11" fill="#4d4d4d" transform="translate(515 96) rotate(-45)">ab</text><path d="M518 100L528 90M523.7 89.6L528.2 89.6L528.2 94.1" stroke="#1f6fbf" stroke-width="1.2" fill="none"/><text x="577.3" y="93.5" font-family="Liberation Sans" font-size="9.6" fill="#4d4d4d" textLength="13.2" lengthAdjust="spacingAndGlyphs">ab</text><text x="577.3" y="101" font-family="Liberation Sans" font-size="9.6" fill="#4d4d4d">c</text><path d="M590.5 94.5C591.5 98 589.5 99.2 584.5 99.2M586.8 96.8L584.3 99.2L586.8 101.5" stroke="#1f6fbf" stroke-width="1.2" fill="none"/><rect x="575.5" y="117.5" width="14.5" height="14" fill="#e8e8e8" stroke="#3a3a3a" stroke-width="1"/><path d="M582.7 117.5V120.5M582.7 128.5V131.5M575.5 120.5H590M575.5 128.5H590" stroke="#3a3a3a" stroke-width="1"/><rect x="576" y="121" width="13.5" height="7" fill="#ffffff" stroke="#1f6fbf" stroke-width="1"/><path d="M578 124.5H587.5M580 122.7L578 124.5L580 126.3M585.5 122.7L587.5 124.5L585.5 126.3" stroke="#1f6fbf" stroke-width="1.1" fill="none"/><text x="727.8" y="131" font-family="Liberation Sans" font-size="16" fill="#555">$</text><text x="765.8" y="131.7" font-family="Liberation Sans" font-size="17.5" fill="#555" textLength="15" lengthAdjust="spacingAndGlyphs">%</text><path d="M800.5 120.3A3.2 3.2 0 0 1 803.6 125C803.2 128 800.5 130.5 797.2 131.3L796.8 130.3C798.6 129.4 799.8 128.3 800.2 126.7A3.2 3.2 0 0 1 800.5 120.3Z" fill="#4a4a4a"/><path d="M814.5 113V136.5" stroke="#8e8e8e" stroke-width="1"/><path d="M830 121.4H821.3M824.3 118.4L821.3 121.4L824.3 124.4" stroke="#1f6fbf" stroke-width="1.3" fill="none"/><ellipse cx="834.1" cy="120.4" rx="1.65" ry="2.85" stroke="#4a4a4a" stroke-width="1.05" fill="none"/><circle cx="829.8" cy="123.3" r="0.65" fill="#4a4a4a"/><circle cx="824.6" cy="131.0" r="0.65" fill="#4a4a4a"/><ellipse cx="829.2" cy="128.4" rx="1.65" ry="2.85" stroke="#4a4a4a" stroke-width="1.05" fill="none"/><ellipse cx="834.1" cy="128.4" rx="1.65" ry="2.85" stroke="#4a4a4a" stroke-width="1.05" fill="none"/><circle cx="850.6" cy="123.3" r="0.65" fill="#4a4a4a"/><ellipse cx="854.6" cy="120.4" rx="1.65" ry="2.85" stroke="#4a4a4a" stroke-width="1.05" fill="none"/><ellipse cx="859.8" cy="120.4" rx="1.65" ry="2.85" stroke="#4a4a4a" stroke-width="1.05" fill="none"/><path d="M847 128.6H856M853 125.6L856 128.6L853 131.6" stroke="#1f6fbf" stroke-width="1.3" fill="none"/><circle cx="855.3" cy="131.0" r="0.65" fill="#4a4a4a"/><ellipse cx="859.8" cy="128.4" rx="1.65" ry="2.85" stroke="#4a4a4a" stroke-width="1.05" fill="none"/><rect x="906.5" y="81.5" width="27" height="21" fill="#e6e6e6" stroke="#333" stroke-width="1"/><path d="M906.5 88.5H933.5M906.5 95.5H933.5M911.5 81.5V102.5M928.5 81.5V102.5" stroke="#333" stroke-width="1"/><rect x="911.5" y="81.5" width="12" height="7" fill="#e88585" stroke="#8b1f1f" stroke-width="1"/><rect x="911.5" y="95.5" width="14.5" height="7" fill="#e88585" stroke="#8b1f1f" stroke-width="1"/><rect x="911.5" y="88.5" width="8" height="7" fill="#acd4f4" stroke="#1d5b9a" stroke-width="1"/><rect x="974.5" y="81.5" width="27.5" height="21" fill="#e6e6e6" stroke="#333" stroke-width="1"/><rect x="983.5" y="88.5" width="18.5" height="14" fill="#acd4f4" stroke="#1d5b9a" stroke-width="1"/><path d="M974.5 88.5H983.5M974.5 95.5H983.5M983.5 81.5V88.5M992.8 81.5V88.5M983.5 95.5H1002M992.8 88.5V102.5" stroke="#333" stroke-width="1"/><path d="M992 100L1004.5 88.5" stroke="#3a3a3a" stroke-width="4" stroke-linecap="round"/><path d="M992 100L1004.5 88.5" stroke="#e8e8e8" stroke-width="2.2" stroke-linecap="round"/><path d="M986 101.5C989 98.5 993.5 100 993 103C992.5 106.5 988 108 984 107C985.5 106 985.5 103 986 101.5Z" fill="#acd4f4" stroke="#1d5b9a" stroke-width="1"/><text x="281" y="195.3" font-family="Liberation Serif" font-style="italic" font-size="16" fill="#d6d6d6" textLength="14.5" lengthAdjust="spacingAndGlyphs">fx</text></svg>
<svg style="left:0;top:0" width="1232" height="556" viewBox="0 0 1232 556"><rect x="19" y="12" width="13" height="11" fill="#185c37"/><rect x="19" y="12" width="13" height="3.7" fill="#21a366"/><rect x="19" y="15.7" width="13" height="3.7" fill="#107c41"/><rect x="16" y="11.3" width="10" height="8.8" rx="1.5" fill="#107c41"/><path d="M19 13.3L22.8 18.2M22.8 13.3L19 18.2" stroke="#fff" stroke-width="1.3"/><path d="M67.3 14.3Q67.6 18.7 70.4 18.6Q72.6 18.5 72.8 15.8M73.6 18.2H77" stroke="#f0f0f0" stroke-width="1.2" fill="none"/><path d="M106.5 18.5A5 5 0 0 0 111.5 23.5H140A5 5 0 0 0 145 18.5" stroke="#a8a8a8" stroke-width="1.2" fill="none"/><path d="M109 19H116M126 18H134M137 18H140" stroke="#e8e8e8" stroke-width="1.2" fill="none"/><path d="M305.5 13V18.5H320.5V10.5" stroke="#f2f2f2" stroke-width="1.1" fill="none"/><path d="M309.5 16L316 10M311 17L317 11" stroke="#f2f2f2" stroke-width="1.1" fill="none"/><path d="M621.2 13.2L626.5 18L631.8 13.2" stroke="#f2f2f2" stroke-width="1.2" fill="none"/><rect x="784" y="-10" width="368" height="40.5" rx="3" fill="#bdbdbd"/><path d="M785 30.5H1149A3 3 0 0 0 1152 27.5V-5" stroke="#7b7b7b" stroke-width="1" fill="none"/></svg>
<div class="t " style="left:370.92px;top:10.59px;font-size:11.00px;line-height:11.00px;color:#f2f2f2;font-weight:normal;font-style:normal;transform:scaleX(1.1919);">BulkO</div>
<div class="t " style="left:407.32px;top:10.59px;font-size:11.00px;line-height:11.00px;color:#f2f2f2;font-weight:normal;font-style:normal;transform:scaleX(0.9275);">rderTempl</div>
<div class="t " style="left:454.46px;top:10.59px;font-size:11.00px;line-height:11.00px;color:#f2f2f2;font-weight:normal;font-style:normal;transform:scaleX(1.1465);">ate (1).xlsx</div>
<div class="r" style="left:522.6px;top:15.0px;width:2.8px;height:2.8px;background:#f2f2f2;border-radius:2px;"></div>
<div class="t " style="left:531.48px;top:10.59px;font-size:11.00px;line-height:11.00px;color:#f2f2f2;font-weight:normal;font-style:normal;transform:scaleX(1.0311);">Saved to this PC</div>
<svg style="left:0;top:0" width="1232" height="556" viewBox="0 0 1232 556"><path d="M0 -1 L0.0 15.0 L1.5 12.0 L4.0 15.3 L6.5 17.88 L9.0 21.2 L12.0 20.8 L16.0 17.9 L17.0 11.5 L19.5 11.31 L22.0 11.0 L26.0 12.8 L30.0 12.0 L34.0 9.9 L38.0 12.8 L42.0 13.1 L46.0 19.4 L50.0 21.5 L53.0 21.2 L56.0 21.9 L59.0 20.62 L62.0 19.7 L66.0 18.3 L70.0 13.5 L73.0 14.6 L75.5 17.3 L78.0 19.7 L80.0 21.9 L82.5 21.8 L85.0 20.74 L87.5 20.39 L90.0 20.8 L93.0 19.2 L95.5 19.75 L98.0 19.01 L100.5 19.05 L103.0 19.5 L106.0 18.2 L109.0 19.39 L112.0 19.16 L115.0 19.7 L117.5 19.72 L120.0 18.8 L123.0 18.12 L126.0 17.5 L129.5 17.39 L133.0 16.9 L136.5 16.26 L140.0 16.6 L142.5 18.54 L145.0 20.1 L147.5 23.22 L150.0 25.3 L154.0 27.9 L157.0 26.6 L160.0 27.3 L162.5 25.38 L165.0 23.4 L167.5 24.69 L170.0 25.3 L173.0 26.54 L176.0 27.3 L179.0 25.04 L182.0 24.0 L184.5 23.06 L187.0 21.4 L191.0 16.2 L195.0 22.7 L197.5 24.78 L200.0 26.6 L204.0 25.3 L207.0 22.12 L210.0 19.5 L212.5 17.54 L215.0 16.9 L217.5 18.36 L220.0 18.8 L224.0 16.9 L227.0 16.86 L230.0 16.9 L233.0 20.46 L236.0 23.4 L239.0 26.53 L242.0 28.6 L246.0 26.0 L250.0 27.3 L253.5 25.95 L257.0 24.0 L260.5 25.89 L264.0 26.6 L266.5 25.65 L269.0 25.42 L271.5 24.12 L274.0 23.4 L277.0 25.31 L280.0 26.0 L284.0 22.7 L287.0 22.8 L290.0 21.27 L293.0 21.4 L296.5 20.59 L300.0 20.8 L304.5 19.5 L304.5 14.0 L307.25 11.35 L310.0 9.5 L314.0 9.1 L316.67 10.39 L319.33 10.28 L322.0 11.0 L326.0 10.1 L329.5 10.28 L333.0 10.1 L337.0 13.0 L340.0 18.2 L342.5 17.57 L345.0 17.5 L348.5 17.71 L352.0 17.9 L354.67 17.61 L357.33 17.42 L360.0 17.5 L363.5 18.62 L367.0 19.5 L369.5 20.57 L372.0 21.4 L374.67 18.17 L377.33 14.05 L380.0 10.0 L382.5 10.3 L385.0 9.4 L387.5 9.65 L390.0 9.59 L392.5 8.89 L395.0 8.4 L397.5 8.58 L400.0 9.7 L402.5 11.95 L405.0 13.2 L408.5 17.85 L412.0 21.2 L414.67 22.5 L417.33 22.76 L420.0 23.4 L422.5 23.15 L425.0 21.9 L427.5 22.21 L430.0 21.2 L432.5 21.13 L435.0 20.55 L437.5 20.06 L440.0 20.5 L442.5 21.12 L445.0 21.44 L447.5 20.3 L450.0 21.0 L452.5 19.67 L455.0 17.5 L458.5 14.82 L462.0 12.4 L464.67 10.44 L467.33 9.18 L470.0 8.0 L472.5 8.03 L475.0 7.82 L477.5 6.31 L480.0 6.6 L482.5 7.31 L485.0 7.06 L487.5 8.56 L490.0 8.8 L493.5 10.01 L497.0 11.7 L499.67 12.73 L502.33 13.37 L505.0 13.2 L507.5 13.24 L510.0 13.96 L512.5 13.03 L515.0 12.74 L517.5 13.51 L520.0 13.4 L522.5 12.81 L525.0 13.1 L527.5 13.46 L530.0 13.8 L532.5 13.23 L535.0 13.13 L537.5 14.35 L540.0 13.9 L542.5 13.73 L545.0 14.72 L547.5 14.72 L550.0 14.08 L552.5 14.28 L555.0 14.45 L557.5 14.71 L560.0 14.6 L562.5 14.82 L565.0 14.86 L567.5 15.03 L570.0 15.57 L572.5 15.05 L575.0 15.03 L577.5 15.52 L580.0 15.3 L582.5 15.05 L585.0 15.25 L587.5 16.32 L590.0 15.8 L592.5 15.95 L595.0 16.0 L597.67 16.32 L600.33 17.88 L603.0 19.0 L606.5 22.01 L610.0 24.8 L612.5 21.98 L615.0 20.5 L617.5 14.81 L620.0 8.8 L623.5 7.14 L627.0 5.1 L630.0 4.48 L633.0 5.1 L636.5 8.58 L640.0 11.7 L642.5 13.8 L645.0 16.0 L647.5 15.9 L650.0 15.09 L652.5 15.24 L655.0 14.6 L658.5 16.03 L662.0 16.8 L664.67 16.63 L667.33 17.18 L670.0 18.3 L672.5 18.22 L675.0 18.3 L677.5 16.98 L680.0 17.0 L682.5 17.14 L685.0 17.53 L687.5 17.35 L690.0 17.8 L692.5 17.31 L695.0 16.94 L697.5 16.72 L700.0 16.6 L702.5 16.96 L705.0 16.77 L707.5 17.1 L710.0 17.5 L712.5 17.71 L715.0 16.49 L717.5 17.07 L720.0 16.8 L722.5 17.43 L725.0 17.13 L727.5 17.31 L730.0 18.0 L732.5 18.3 L735.0 17.38 L737.5 17.19 L740.0 17.5 L742.5 16.73 L745.0 16.41 L747.5 14.89 L750.0 14.52 L752.5 13.85 L755.0 13.4 L758.0 11.82 L761.0 9.3 L764.5 12.46 L768.0 15.8 L771.0 16.92 L774.0 16.59 L777.0 17.45 L780.0 18.3 L782.5 18.09 L785.0 17.99 L787.5 16.96 L790.0 16.6 L792.5 16.94 L795.0 17.52 L797.5 18.82 L800.0 19.5 L802.5 18.45 L805.0 18.7 L807.5 18.12 L810.0 16.59 L812.5 16.11 L815.0 15.8 L817.5 16.54 L820.0 16.62 L822.5 17.17 L825.0 16.83 L827.5 16.84 L830.0 17.38 L832.5 18.4 L835.0 18.3 L837.5 17.81 L840.0 17.74 L842.5 17.67 L845.0 17.51 L847.5 17.32 L850.0 17.87 L852.5 16.63 L855.0 16.25 L857.5 17.39 L860.0 16.6 L863.0 17.23 L866.0 17.48 L869.0 16.81 L872.0 17.0 L874.67 20.06 L877.33 22.46 L880.0 24.3 L882.67 25.14 L885.33 27.11 L888.0 28.0 L891.5 29.87 L895.0 30.8 L897.5 30.89 L900.0 30.56 L902.5 30.1 L905.0 30.04 L907.5 29.75 L910.0 30.0 L912.5 27.07 L915.0 25.47 L917.5 22.73 L920.0 20.7 L922.5 20.52 L925.0 18.83 L927.5 19.42 L930.0 18.5 L932.5 18.21 L935.0 17.0 L937.5 17.51 L940.0 17.46 L942.5 16.96 L945.0 16.12 L947.5 17.09 L950.0 16.24 L952.5 16.37 L955.0 16.6 L957.5 17.03 L960.0 17.03 L962.5 17.08 L965.0 18.01 L967.5 17.76 L970.0 17.8 L972.5 15.8 L975.0 13.9 L977.5 12.98 L980.0 10.7 L982.67 13.43 L985.33 16.63 L988.0 19.0 L991.0 19.07 L994.0 19.13 L997.0 19.87 L1000.0 20.1 L1002.5 18.37 L1005.0 15.29 L1007.5 13.98 L1010.0 11.4 L1012.5 12.57 L1015.0 12.98 L1017.5 13.58 L1020.0 13.7 L1022.5 12.72 L1025.0 13.31 L1027.5 13.35 L1030.0 11.92 L1032.5 11.94 L1035.0 11.65 L1037.5 11.73 L1040.0 11.4 L1042.5 11.84 L1045.0 12.46 L1047.5 13.44 L1050.0 12.9 L1052.5 13.53 L1055.0 14.7 L1057.67 16.78 L1060.33 19.37 L1063.0 22.5 L1065.83 21.7 L1068.67 22.76 L1071.5 22.4 L1074.33 21.12 L1077.17 21.5 L1080.0 21.3 L1082.5 20.66 L1085.0 20.27 L1087.5 19.94 L1090.0 19.97 L1092.5 19.5 L1095.0 19.0 L1097.5 16.73 L1100.0 14.42 L1102.5 12.54 L1105.0 10.7 L1107.5 10.75 L1110.0 11.93 L1112.5 12.73 L1115.0 13.0 L1118.5 15.83 L1122.0 19.0 L1124.67 15.65 L1127.33 13.02 L1130.0 10.7 L1132.5 10.72 L1135.0 11.25 L1137.5 11.7 L1140.0 11.33 L1142.5 12.12 L1145.0 11.9 L1148.5 12.62 L1152.0 13.0 L1154.5 13.33 L1157.0 13.67 L1159.5 14.27 L1162.0 14.7 L1164.5 16.93 L1167.0 18.49 L1169.5 20.82 L1172.0 22.5 L1174.5 20.85 L1177.0 18.94 L1179.5 17.75 L1182.0 16.1 L1184.67 19.31 L1187.33 21.37 L1190.0 24.9 L1192.5 22.59 L1195.0 20.4 L1197.5 18.83 L1200.0 16.1 L1202.5 18.31 L1205.0 19.12 L1207.5 21.46 L1210.0 22.5 L1213.0 23.21 L1216.0 22.77 L1219.0 23.35 L1222.0 23.7 L1224.5 21.1 L1227.0 19.99 L1229.5 17.7 L1232 15.4 L1232 -1Z" fill="#000"/><defs><linearGradient id="sg" x1="0" y1="0" x2="0" y2="1"><stop offset="0" stop-color="#4a4a4a"/><stop offset="0.35" stop-color="#262626"/><stop offset="1" stop-color="#0d0d0d"/></linearGradient></defs><path d="M-1 560 L-1 536.8 L0.0 536.8 L2.5 537.8 L5.0 538.4 L7.5 541.24 L10.0 543.3 L12.5 543.95 L15.0 544.36 L17.5 544.21 L20.0 544.0 L22.5 544.75 L25.0 543.4 L27.5 544.17 L30.0 545.01 L32.5 544.61 L35.0 545.09 L37.5 543.91 L40.0 544.55 L42.5 544.27 L45.0 544.82 L47.5 544.94 L50.0 544.9 L52.5 544.19 L55.0 544.58 L57.5 544.75 L60.0 545.83 L62.5 545.66 L65.0 544.76 L67.5 545.84 L70.0 544.86 L72.5 545.69 L75.0 544.97 L77.5 544.84 L80.0 545.7 L82.5 543.87 L85.0 540.39 L87.5 537.97 L90.0 536.0 L92.5 535.75 L95.0 534.55 L97.5 532.59 L100.0 531.9 L102.5 532.46 L105.0 531.6 L107.5 531.63 L110.0 530.69 L112.5 531.69 L115.0 530.8 L118.5 531.21 L122.0 531.0 L126.0 540.0 L128.8 540.53 L131.6 540.19 L134.4 539.02 L137.2 538.9 L140.0 538.9 L142.5 538.39 L145.0 538.38 L147.5 538.28 L150.0 538.68 L152.5 539.19 L155.0 538.26 L157.5 539.36 L160.0 538.84 L162.5 538.82 L165.0 539.66 L167.5 539.14 L170.0 539.2 L172.5 540.53 L175.0 542.42 L177.5 544.4 L180.0 545.7 L182.67 542.29 L185.33 541.06 L188.0 537.6 L191.0 536.84 L194.0 538.0 L197.0 538.15 L200.0 537.6 L202.5 536.75 L205.0 537.91 L207.5 537.16 L210.0 537.3 L212.5 537.26 L215.0 536.18 L217.5 536.07 L220.0 536.12 L222.5 537.19 L225.0 535.81 L227.5 536.54 L230.0 536.65 L232.5 536.51 L235.0 535.38 L237.5 535.23 L240.0 535.3 L242.5 535.51 L245.0 536.07 L247.5 535.17 L250.0 536.36 L252.5 536.61 L255.0 536.88 L257.5 535.73 L260.0 537.35 L262.5 536.15 L265.0 536.71 L267.5 537.31 L270.0 537.3 L272.5 536.87 L275.0 534.84 L277.5 534.68 L280.0 532.97 L282.5 531.5 L285.0 530.41 L287.5 529.08 L290.0 528.5 L292.67 529.79 L295.33 531.87 L298.0 534.4 L301.5 537.1 L305.0 539.2 L307.5 537.94 L310.0 534.56 L312.5 532.33 L315.0 531.0 L318.5 532.48 L322.0 532.4 L324.67 535.05 L327.33 537.45 L330.0 540.2 L332.5 539.65 L335.0 540.1 L337.5 540.35 L340.0 539.63 L342.5 539.45 L345.0 538.74 L347.5 539.99 L350.0 539.2 L352.5 538.33 L355.0 538.94 L357.5 539.37 L360.0 538.11 L362.5 538.95 L365.0 539.17 L367.5 538.53 L370.0 538.2 L372.5 539.05 L375.0 538.35 L377.5 539.27 L380.0 539.2 L382.5 540.7 L385.0 540.21 L387.5 540.86 L390.0 542.12 L392.5 542.27 L395.0 542.1 L397.5 542.28 L400.0 540.87 L402.5 540.34 L405.0 540.15 L407.5 539.17 L410.0 538.29 L412.5 537.89 L415.0 536.89 L417.5 536.68 L420.0 536.3 L422.5 538.78 L425.0 540.44 L427.5 541.6 L430.0 543.1 L432.5 541.65 L435.0 539.94 L437.5 538.09 L440.0 537.3 L442.5 537.09 L445.0 538.07 L447.5 538.36 L450.0 537.71 L452.5 538.55 L455.0 538.69 L457.5 538.72 L460.0 538.83 L462.5 539.14 L465.0 538.66 L467.5 539.37 L470.0 539.2 L472.5 538.69 L475.0 538.86 L477.5 539.16 L480.0 538.87 L482.5 538.08 L485.0 538.96 L487.5 538.33 L490.0 538.06 L492.5 536.99 L495.0 537.69 L497.5 537.06 L500.0 537.3 L502.5 537.63 L505.0 537.35 L507.5 537.98 L510.0 537.76 L512.5 538.06 L515.0 537.39 L517.5 537.92 L520.0 538.13 L522.5 538.33 L525.0 537.62 L527.5 538.47 L530.0 538.57 L532.5 538.33 L535.0 538.85 L537.5 538.87 L540.0 538.2 L542.5 538.55 L545.0 538.9 L547.5 538.64 L550.0 540.04 L552.5 540.52 L555.0 540.11 L557.5 540.78 L560.0 541.15 L562.5 541.49 L565.0 540.92 L567.5 542.22 L570.0 542.1 L572.5 541.87 L575.0 541.64 L577.5 540.89 L580.0 540.85 L582.5 540.73 L585.0 540.14 L587.5 539.92 L590.0 539.2 L592.5 536.27 L595.0 534.31 L597.5 532.58 L600.0 530.5 L603.5 529.24 L607.0 527.5 L609.67 529.98 L612.33 533.66 L615.0 536.3 L617.5 537.96 L620.0 538.47 L622.5 540.6 L625.0 542.1 L627.5 540.86 L630.0 539.79 L632.5 539.11 L635.0 538.61 L637.5 537.59 L640.0 537.3 L642.5 538.51 L645.0 539.96 L647.5 542.34 L650.0 544.1 L652.5 541.96 L655.0 540.38 L657.5 538.39 L660.0 536.3 L662.5 537.83 L665.0 540.85 L667.5 541.35 L670.0 544.1 L672.5 542.61 L675.0 541.07 L677.5 539.94 L680.0 538.13 L682.5 537.94 L685.0 535.87 L687.5 534.0 L690.0 533.4 L693.5 532.13 L697.0 530.5 L699.67 530.82 L702.33 532.51 L705.0 533.4 L707.5 534.11 L710.0 535.46 L712.5 537.03 L715.0 537.78 L717.5 538.1 L720.0 539.2 L722.5 538.25 L725.0 536.53 L727.5 534.64 L730.0 533.4 L732.5 532.46 L735.0 532.83 L737.5 532.41 L740.0 532.68 L742.5 532.34 L745.0 531.4 L747.5 530.62 L750.0 530.5 L752.67 534.03 L755.33 535.5 L758.0 539.2 L760.75 538.94 L763.5 540.03 L766.25 540.47 L769.0 540.08 L771.75 541.22 L774.5 542.0 L777.25 541.54 L780.0 542.1 L782.5 541.92 L785.0 541.51 L787.5 541.54 L790.0 542.56 L792.5 541.53 L795.0 542.39 L797.5 542.24 L800.0 541.65 L802.5 541.04 L805.0 542.12 L807.5 541.27 L810.0 541.2 L812.5 540.28 L815.0 539.35 L817.5 539.63 L820.0 538.07 L822.5 536.96 L825.0 536.48 L827.5 535.14 L830.0 535.15 L832.5 534.09 L835.0 533.4 L837.83 532.74 L840.67 533.18 L843.5 532.92 L846.33 531.29 L849.17 531.79 L852.0 531.4 L854.67 533.64 L857.33 537.3 L860.0 539.2 L863.0 539.9 L866.0 539.29 L869.0 539.58 L872.0 540.2 L874.67 537.38 L877.33 536.45 L880.0 533.4 L882.5 532.82 L885.0 533.07 L887.5 532.61 L890.0 532.63 L892.5 532.32 L895.0 532.29 L897.5 531.04 L900.0 531.4 L902.5 532.1 L905.0 531.66 L907.5 532.32 L910.0 532.29 L912.5 532.51 L915.0 533.17 L917.5 533.36 L920.0 533.7 L922.5 534.76 L925.0 536.66 L927.5 537.7 L930.0 538.09 L932.5 539.72 L935.0 541.4 L937.5 542.4 L940.0 544.22 L942.5 545.25 L945.0 545.7 L947.5 542.92 L950.0 539.22 L952.5 537.6 L955.0 534.3 L957.5 533.47 L960.0 532.99 L962.5 532.48 L965.0 531.64 L967.5 530.69 L970.0 530.0 L972.5 531.61 L975.0 531.72 L977.5 532.68 L980.0 534.36 L982.5 534.26 L985.0 535.7 L987.5 536.8 L990.0 539.08 L992.5 539.28 L995.0 541.4 L997.83 542.19 L1000.67 542.21 L1003.5 542.04 L1006.33 542.06 L1009.17 543.1 L1012.0 542.9 L1014.57 541.51 L1017.14 538.24 L1019.71 536.74 L1022.29 534.81 L1024.86 532.68 L1027.43 530.37 L1030.0 528.6 L1032.5 527.75 L1035.0 528.14 L1037.5 528.2 L1040.0 527.4 L1042.67 526.01 L1045.33 525.57 L1048.0 525.3 L1050.71 525.51 L1053.43 525.17 L1056.14 524.66 L1058.86 523.34 L1061.57 524.16 L1064.29 524.27 L1067.0 523.2 L1069.67 528.13 L1072.33 531.79 L1075.0 535.6 L1077.67 538.88 L1080.33 544.15 L1083.0 547.6 L1085.6 547.33 L1088.2 548.19 L1090.8 548.86 L1093.4 548.66 L1096.0 548.5 L1098.8 545.68 L1101.6 543.69 L1104.4 542.45 L1107.2 538.98 L1110.0 537.3 L1113.5 536.98 L1117.0 536.3 L1119.5 537.86 L1122.0 539.16 L1124.5 541.6 L1127.0 543.1 L1129.6 540.95 L1132.2 539.63 L1134.8 538.65 L1137.4 536.74 L1140.0 536.0 L1142.5 534.87 L1145.0 535.27 L1147.5 535.11 L1150.0 534.3 L1152.5 535.98 L1155.0 535.86 L1157.5 537.42 L1160.0 538.6 L1162.5 541.15 L1165.0 544.3 L1167.5 542.69 L1170.0 540.75 L1172.5 539.7 L1175.0 537.03 L1177.5 534.76 L1180.0 533.7 L1182.5 534.17 L1185.0 533.44 L1187.5 534.36 L1190.0 534.31 L1192.5 535.11 L1195.0 534.69 L1197.5 534.94 L1200.0 534.9 L1202.5 534.45 L1205.0 534.83 L1207.5 534.28 L1210.0 535.0 L1212.5 534.55 L1215.0 533.86 L1217.5 533.95 L1220.0 534.3 L1223.0 532.52 L1226.0 531.53 L1229.0 529.06 L1232 528 L1233 528 L1233 560Z" fill="#1e1e1e"/><path d="M0.0 536.8 L2.5 537.8 L5.0 538.4 L7.5 541.24 L10.0 543.3 L12.5 543.95 L15.0 544.36 L17.5 544.21 L20.0 544.0 L22.5 544.75 L25.0 543.4 L27.5 544.17 L30.0 545.01 L32.5 544.61 L35.0 545.09 L37.5 543.91 L40.0 544.55 L42.5 544.27 L45.0 544.82 L47.5 544.94 L50.0 544.9 L52.5 544.19 L55.0 544.58 L57.5 544.75 L60.0 545.83 L62.5 545.66 L65.0 544.76 L67.5 545.84 L70.0 544.86 L72.5 545.69 L75.0 544.97 L77.5 544.84 L80.0 545.7 L82.5 543.87 L85.0 540.39 L87.5 537.97 L90.0 536.0 L92.5 535.75 L95.0 534.55 L97.5 532.59 L100.0 531.9 L102.5 532.46 L105.0 531.6 L107.5 531.63 L110.0 530.69 L112.5 531.69 L115.0 530.8 L118.5 531.21 L122.0 531.0 L126.0 540.0 L128.8 540.53 L131.6 540.19 L134.4 539.02 L137.2 538.9 L140.0 538.9 L142.5 538.39 L145.0 538.38 L147.5 538.28 L150.0 538.68 L152.5 539.19 L155.0 538.26 L157.5 539.36 L160.0 538.84 L162.5 538.82 L165.0 539.66 L167.5 539.14 L170.0 539.2 L172.5 540.53 L175.0 542.42 L177.5 544.4 L180.0 545.7 L182.67 542.29 L185.33 541.06 L188.0 537.6 L191.0 536.84 L194.0 538.0 L197.0 538.15 L200.0 537.6 L202.5 536.75 L205.0 537.91 L207.5 537.16 L210.0 537.3 L212.5 537.26 L215.0 536.18 L217.5 536.07 L220.0 536.12 L222.5 537.19 L225.0 535.81 L227.5 536.54 L230.0 536.65 L232.5 536.51 L235.0 535.38 L237.5 535.23 L240.0 535.3 L242.5 535.51 L245.0 536.07 L247.5 535.17 L250.0 536.36 L252.5 536.61 L255.0 536.88 L257.5 535.73 L260.0 537.35 L262.5 536.15 L265.0 536.71 L267.5 537.31 L270.0 537.3 L272.5 536.87 L275.0 534.84 L277.5 534.68 L280.0 532.97 L282.5 531.5 L285.0 530.41 L287.5 529.08 L290.0 528.5 L292.67 529.79 L295.33 531.87 L298.0 534.4 L301.5 537.1 L305.0 539.2 L307.5 537.94 L310.0 534.56 L312.5 532.33 L315.0 531.0 L318.5 532.48 L322.0 532.4 L324.67 535.05 L327.33 537.45 L330.0 540.2 L332.5 539.65 L335.0 540.1 L337.5 540.35 L340.0 539.63 L342.5 539.45 L345.0 538.74 L347.5 539.99 L350.0 539.2 L352.5 538.33 L355.0 538.94 L357.5 539.37 L360.0 538.11 L362.5 538.95 L365.0 539.17 L367.5 538.53 L370.0 538.2 L372.5 539.05 L375.0 538.35 L377.5 539.27 L380.0 539.2 L382.5 540.7 L385.0 540.21 L387.5 540.86 L390.0 542.12 L392.5 542.27 L395.0 542.1 L397.5 542.28 L400.0 540.87 L402.5 540.34 L405.0 540.15 L407.5 539.17 L410.0 538.29 L412.5 537.89 L415.0 536.89 L417.5 536.68 L420.0 536.3 L422.5 538.78 L425.0 540.44 L427.5 541.6 L430.0 543.1 L432.5 541.65 L435.0 539.94 L437.5 538.09 L440.0 537.3 L442.5 537.09 L445.0 538.07 L447.5 538.36 L450.0 537.71 L452.5 538.55 L455.0 538.69 L457.5 538.72 L460.0 538.83 L462.5 539.14 L465.0 538.66 L467.5 539.37 L470.0 539.2 L472.5 538.69 L475.0 538.86 L477.5 539.16 L480.0 538.87 L482.5 538.08 L485.0 538.96 L487.5 538.33 L490.0 538.06 L492.5 536.99 L495.0 537.69 L497.5 537.06 L500.0 537.3 L502.5 537.63 L505.0 537.35 L507.5 537.98 L510.0 537.76 L512.5 538.06 L515.0 537.39 L517.5 537.92 L520.0 538.13 L522.5 538.33 L525.0 537.62 L527.5 538.47 L530.0 538.57 L532.5 538.33 L535.0 538.85 L537.5 538.87 L540.0 538.2 L542.5 538.55 L545.0 538.9 L547.5 538.64 L550.0 540.04 L552.5 540.52 L555.0 540.11 L557.5 540.78 L560.0 541.15 L562.5 541.49 L565.0 540.92 L567.5 542.22 L570.0 542.1 L572.5 541.87 L575.0 541.64 L577.5 540.89 L580.0 540.85 L582.5 540.73 L585.0 540.14 L587.5 539.92 L590.0 539.2 L592.5 536.27 L595.0 534.31 L597.5 532.58 L600.0 530.5 L603.5 529.24 L607.0 527.5 L609.67 529.98 L612.33 533.66 L615.0 536.3 L617.5 537.96 L620.0 538.47 L622.5 540.6 L625.0 542.1 L627.5 540.86 L630.0 539.79 L632.5 539.11 L635.0 538.61 L637.5 537.59 L640.0 537.3 L642.5 538.51 L645.0 539.96 L647.5 542.34 L650.0 544.1 L652.5 541.96 L655.0 540.38 L657.5 538.39 L660.0 536.3 L662.5 537.83 L665.0 540.85 L667.5 541.35 L670.0 544.1 L672.5 542.61 L675.0 541.07 L677.5 539.94 L680.0 538.13 L682.5 537.94 L685.0 535.87 L687.5 534.0 L690.0 533.4 L693.5 532.13 L697.0 530.5 L699.67 530.82 L702.33 532.51 L705.0 533.4 L707.5 534.11 L710.0 535.46 L712.5 537.03 L715.0 537.78 L717.5 538.1 L720.0 539.2 L722.5 538.25 L725.0 536.53 L727.5 534.64 L730.0 533.4 L732.5 532.46 L735.0 532.83 L737.5 532.41 L740.0 532.68 L742.5 532.34 L745.0 531.4 L747.5 530.62 L750.0 530.5 L752.67 534.03 L755.33 535.5 L758.0 539.2 L760.75 538.94 L763.5 540.03 L766.25 540.47 L769.0 540.08 L771.75 541.22 L774.5 542.0 L777.25 541.54 L780.0 542.1 L782.5 541.92 L785.0 541.51 L787.5 541.54 L790.0 542.56 L792.5 541.53 L795.0 542.39 L797.5 542.24 L800.0 541.65 L802.5 541.04 L805.0 542.12 L807.5 541.27 L810.0 541.2 L812.5 540.28 L815.0 539.35 L817.5 539.63 L820.0 538.07 L822.5 536.96 L825.0 536.48 L827.5 535.14 L830.0 535.15 L832.5 534.09 L835.0 533.4 L837.83 532.74 L840.67 533.18 L843.5 532.92 L846.33 531.29 L849.17 531.79 L852.0 531.4 L854.67 533.64 L857.33 537.3 L860.0 539.2 L863.0 539.9 L866.0 539.29 L869.0 539.58 L872.0 540.2 L874.67 537.38 L877.33 536.45 L880.0 533.4 L882.5 532.82 L885.0 533.07 L887.5 532.61 L890.0 532.63 L892.5 532.32 L895.0 532.29 L897.5 531.04 L900.0 531.4 L902.5 532.1 L905.0 531.66 L907.5 532.32 L910.0 532.29 L912.5 532.51 L915.0 533.17 L917.5 533.36 L920.0 533.7 L922.5 534.76 L925.0 536.66 L927.5 537.7 L930.0 538.09 L932.5 539.72 L935.0 541.4 L937.5 542.4 L940.0 544.22 L942.5 545.25 L945.0 545.7 L947.5 542.92 L950.0 539.22 L952.5 537.6 L955.0 534.3 L957.5 533.47 L960.0 532.99 L962.5 532.48 L965.0 531.64 L967.5 530.69 L970.0 530.0 L972.5 531.61 L975.0 531.72 L977.5 532.68 L980.0 534.36 L982.5 534.26 L985.0 535.7 L987.5 536.8 L990.0 539.08 L992.5 539.28 L995.0 541.4 L997.83 542.19 L1000.67 542.21 L1003.5 542.04 L1006.33 542.06 L1009.17 543.1 L1012.0 542.9 L1014.57 541.51 L1017.14 538.24 L1019.71 536.74 L1022.29 534.81 L1024.86 532.68 L1027.43 530.37 L1030.0 528.6 L1032.5 527.75 L1035.0 528.14 L1037.5 528.2 L1040.0 527.4 L1042.67 526.01 L1045.33 525.57 L1048.0 525.3 L1050.71 525.51 L1053.43 525.17 L1056.14 524.66 L1058.86 523.34 L1061.57 524.16 L1064.29 524.27 L1067.0 523.2 L1069.67 528.13 L1072.33 531.79 L1075.0 535.6 L1077.67 538.88 L1080.33 544.15 L1083.0 547.6 L1085.6 547.33 L1088.2 548.19 L1090.8 548.86 L1093.4 548.66 L1096.0 548.5 L1098.8 545.68 L1101.6 543.69 L1104.4 542.45 L1107.2 538.98 L1110.0 537.3 L1113.5 536.98 L1117.0 536.3 L1119.5 537.86 L1122.0 539.16 L1124.5 541.6 L1127.0 543.1 L1129.6 540.95 L1132.2 539.63 L1134.8 538.65 L1137.4 536.74 L1140.0 536.0 L1142.5 534.87 L1145.0 535.27 L1147.5 535.11 L1150.0 534.3 L1152.5 535.98 L1155.0 535.86 L1157.5 537.42 L1160.0 538.6 L1162.5 541.15 L1165.0 544.3 L1167.5 542.69 L1170.0 540.75 L1172.5 539.7 L1175.0 537.03 L1177.5 534.76 L1180.0 533.7 L1182.5 534.17 L1185.0 533.44 L1187.5 534.36 L1190.0 534.31 L1192.5 535.11 L1195.0 534.69 L1197.5 534.94 L1200.0 534.9 L1202.5 534.45 L1205.0 534.83 L1207.5 534.28 L1210.0 535.0 L1212.5 534.55 L1215.0 533.86 L1217.5 533.95 L1220.0 534.3 L1223.0 532.52 L1226.0 531.53 L1229.0 529.06 L1232 528" fill="none" stroke="#3c3c3c" stroke-width="1.6" transform="translate(0 0.8)"/><path d="M-1 560 L-1 537 L0 537 L10 545 L20 551.4 L50 553 L80 553.8 L90 549 L100 543.3 L115 540 L126 540.8 L140 547.3 L170 546.5 L185 552.2 L190 547 L240 546 L280 547 L300 541.2 L312 546 L325 541.2 L350 549 L400 550 L420 551.9 L430 548 L440 549 L470 547 L540 546 L580 550 L600 546 L612 539.2 L635 550 L660 549 L680 550.9 L700 544.1 L720 547 L745 541.2 L790 550.9 L830 549 L855 542.1 L875 546 L890 544.1 L915 540 L945 549.1 L965 538.6 L990 542.9 L1005 547.1 L1030 537.1 L1040 537.3 L1060 534.4 L1073 534 L1075 535.6 L1083 547.6 L1092 556 L1110 556 L1120 546.4 L1135 551 L1140 549 L1160 545.7 L1170 550.9 L1200 544.3 L1232 540 L1233 540 L1233 560Z" fill="#fff"/></svg>
</body></html>
